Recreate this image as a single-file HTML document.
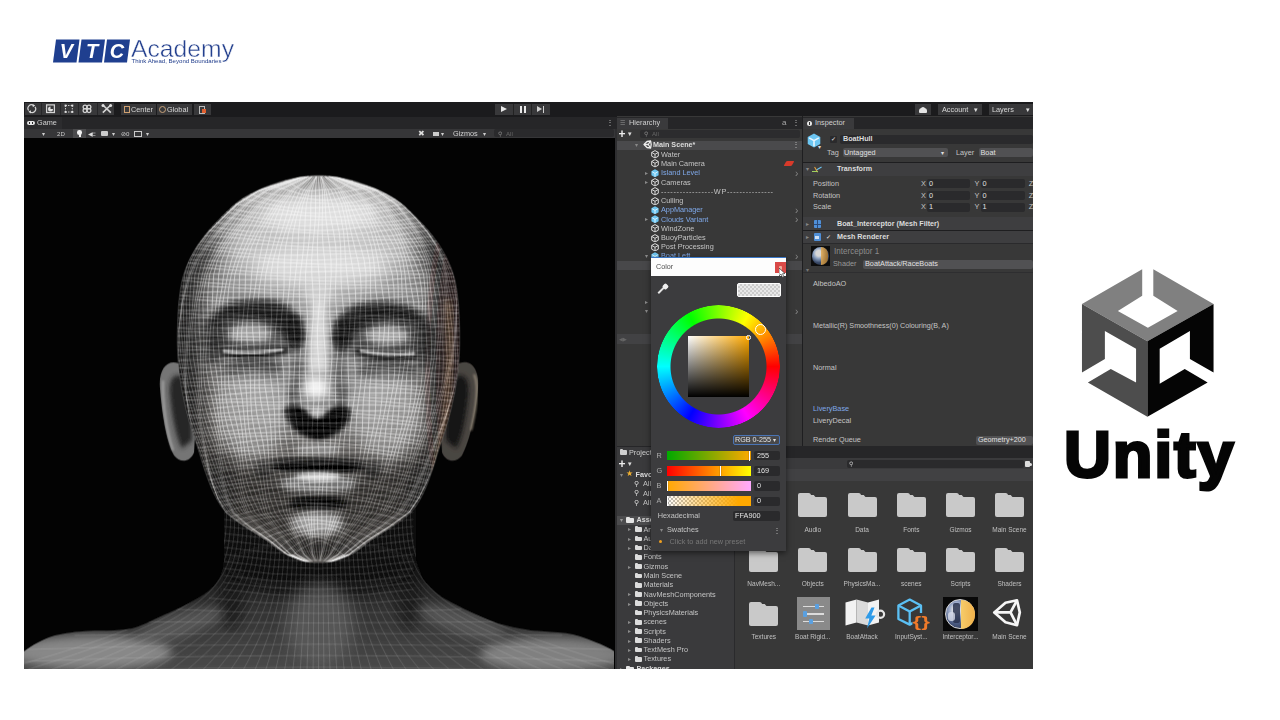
<!DOCTYPE html>
<html lang="en">
<head>
<meta charset="utf-8">
<title>VTC Academy - Unity</title>
<style>
html,body{margin:0;padding:0;background:#fff;}
body{width:1280px;height:720px;position:relative;overflow:hidden;font-family:"Liberation Sans",sans-serif;}
.abs{position:absolute;}
#edbg{position:absolute;left:24px;top:102px;width:1009px;height:567px;background:#383838;}
#ed{position:absolute;left:24px;top:102px;width:1009px;height:567px;overflow:hidden;font-size:8px;color:#c8c8c8;line-height:9px;filter:blur(0.42px);}
#ed div{position:absolute;white-space:nowrap;}
.t{color:#c4c4c4;}
.b{font-weight:bold;color:#dcdcdc;}
.blue{color:#7fa8e8;}
.fld{background:#2a2a2a;border-radius:1.5px;}
.dd{background:#515151;border-radius:1.5px;}
.btn{background:#3d3d3d;border-radius:1px;}
.lbl{font-size:6.5px;color:#c0c0c0;text-align:center;width:48px;}
</style>
</head>
<body>

<!-- VTC Academy logo -->
<div class="abs" id="vtc" style="left:0;top:0;width:260px;height:80px;filter:blur(0.3px);">
<svg width="260" height="80" viewBox="0 0 260 80">
  <g fill="#1f3f8f">
    <polygon points="56,39.5 79.5,39.5 76.5,62.5 53,62.5"/>
    <polygon points="81.5,39.5 105,39.5 102,62.5 78.5,62.5"/>
    <polygon points="107,39.5 130,39.5 127,62.5 104,62.5"/>
  </g>
  <g font-family="Liberation Sans, sans-serif" font-weight="bold" font-style="italic" font-size="20" fill="#fff" text-anchor="middle">
    <text x="66.3" y="58.2">V</text>
    <text x="92" y="58.2">T</text>
    <text x="117" y="58.2">C</text>
  </g>
  <text x="131" y="57" font-family="Liberation Sans, sans-serif" font-size="24" fill="#24408e" stroke="#fff" stroke-width="0.45" textLength="103" lengthAdjust="spacingAndGlyphs">Academy</text>
  <text x="131.5" y="62.6" font-family="Liberation Sans, sans-serif" font-size="4.6" fill="#24408e" textLength="90" lengthAdjust="spacingAndGlyphs">Think Ahead, Beyond Boundaries</text>
</svg>
</div>

<!-- Unity logo -->
<div class="abs" id="unity" style="left:1060px;top:255px;width:180px;height:170px;">
<svg width="180" height="170" viewBox="0 0 762 719.67">
  <polygon fill="#808080" points="93,207 348,60 348,172 245,237 372,308 498,237 395,172 395,60 650,207 370,365"/>
  <polygon fill="#4d4d4d" points="93,207 370,365 370,685 118,540 215,483 322,540 322,397 190,322 190,440 93,497"/>
  <polygon fill="#050505" points="650,207 370,365 370,685 625,540 528,483 422,545 422,397 550,322 550,440 650,497"/>
</svg>
</div>
<div class="abs" id="unitytxt" style="left:1064px;top:415px;width:190px;height:80px;font-weight:bold;font-size:65px;line-height:80px;color:#050505;-webkit-text-stroke:3px #050505;letter-spacing:1.8px;">Unity</div>

<!-- Unity editor screenshot -->
<div id="edbg"></div>
<div id="ed">
<svg width="0" height="0" style="position:absolute"><defs><symbol id="cube" viewBox="0 0 8 8.6"><path d="M4,0.6 L7.3,2.4 V6.2 L4,8 L0.7,6.2 V2.4 Z M0.7,2.4 L4,4.3 L7.3,2.4 M4,4.3 V8" fill="none" stroke="#dcdcdc" stroke-width="1" stroke-linejoin="round"/></symbol><symbol id="cubeb" viewBox="0 0 8 8.6"><path d="M4,0.3 L7.6,2.3 V6.3 L4,8.3 L0.4,6.3 V2.3 Z" fill="#6cc6f2"/><path d="M1.2,2.8 L4,4.4 L6.8,2.8 M4,4.4 V7.6" fill="none" stroke="#e8f6ff" stroke-width="0.9"/></symbol></defs></svg>
<div style="left:0.0px;top:0.0px;width:1009.0px;height:15.0px;background:#1b1b1d;"></div>
<div style="left:0.7px;top:1.3px;width:89.5px;height:11.3px;background:#38383a;"></div>
<div style="left:17.2px;top:1.3px;width:0.8px;height:11.3px;background:#262628;"></div>
<div style="left:35.7px;top:1.3px;width:0.8px;height:11.3px;background:#262628;"></div>
<div style="left:54.0px;top:1.3px;width:0.8px;height:11.3px;background:#262628;"></div>
<div style="left:72.5px;top:1.3px;width:0.8px;height:11.3px;background:#262628;"></div>
<div style="left:0.0px;top:1.0px;width:92px;height:12px;"><svg width="92" height="12" viewBox="24 103 92 12"><g fill="none" stroke="#d4d4d4" stroke-width="1.25"><path d="M28.6,110.5 A3.6,3.6 0 0 1 33.5,105.4 M35,106.9 A3.6,3.6 0 0 1 30.1,112"/><rect x="46.6" y="104.9" width="7.8" height="7.6"/><path d="M65.5,105.5 V112 M72.3,105.5 V112 M65.5,105.5 H72.3 M65.5,112 H72.3" stroke-dasharray="1.3 1.3" stroke-width="1"/><circle cx="85" cy="107" r="1.9"/><circle cx="89" cy="107" r="1.9"/><circle cx="85" cy="110.6" r="1.9"/><circle cx="89" cy="110.6" r="1.9"/><path d="M102.8,105 L110.8,112.6 M110.8,105 L102.8,112.6" stroke-width="1.6"/></g><g fill="#e0e0e0"><path d="M32.6,104 L35.2,105.6 L32.8,107.2Z M31,113.4 L28.4,111.8 L30.8,110.2Z"/><path d="M50.5,106.5 A2.5,2.5 0 1 0 53,109 L50.5,109Z"/><rect x="64.6" y="104.6" width="1.9" height="1.9"/><rect x="71.4" y="104.6" width="1.9" height="1.9"/><rect x="64.6" y="111" width="1.9" height="1.9"/><rect x="71.4" y="111" width="1.9" height="1.9"/><circle cx="103" cy="105.4" r="1.5"/><circle cx="110.6" cy="105.4" r="1.5"/></g></svg></div>
<div style="left:97.3px;top:2.0px;width:35.0px;height:11.0px;background:#38383a;"></div>
<div style="left:133.0px;top:2.0px;width:35.0px;height:11.0px;background:#38383a;"></div>
<div style="left:99.5px;top:4.0px;width:6.0px;height:7.0px;border:1px solid #d0a070;box-sizing:border-box;"></div>
<div class="t" style="left:107.0px;top:2.8px;height:10px;line-height:10px;font-size:7.3px;color:#d8d8d8;">Center</div>
<div style="left:134.5px;top:4.0px;width:7.0px;height:7.0px;border-radius:50%;border:1.5px solid #c9a27a;box-sizing:border-box;"></div>
<div class="t" style="left:143.0px;top:2.8px;height:10px;line-height:10px;font-size:7.3px;color:#d8d8d8;">Global</div>
<div style="left:170.4px;top:2.0px;width:16.6px;height:11.0px;background:#38383a;"></div>
<div style="left:175.0px;top:3.5px;width:6.0px;height:8.0px;border:1px solid #bbb;box-sizing:border-box;"></div>
<div style="left:178.0px;top:6.5px;width:4.0px;height:4.0px;background:#e06030;"></div>
<div style="left:471.3px;top:2.0px;width:54.3px;height:11.0px;background:#38383a;"></div>
<div style="left:489.2px;top:2.0px;width:0.8px;height:11.0px;background:#222;"></div>
<div style="left:507.4px;top:2.0px;width:0.8px;height:11.0px;background:#222;"></div>
<div style="left:477.0px;top:4.0px;width:0;height:0;border-left:6px solid #e8e8e8;border-top:3.5px solid transparent;border-bottom:3.5px solid transparent;"></div>
<div style="left:495.5px;top:4.0px;width:2.0px;height:7.0px;background:#e8e8e8;"></div>
<div style="left:499.5px;top:4.0px;width:2.0px;height:7.0px;background:#e8e8e8;"></div>
<div style="left:513.0px;top:4.0px;width:0;height:0;border-left:5px solid #d0d0d0;border-top:3.5px solid transparent;border-bottom:3.5px solid transparent;"></div>
<div style="left:518.5px;top:4.0px;width:1.5px;height:7.0px;background:#d0d0d0;"></div>
<div style="left:890.5px;top:2.0px;width:16.5px;height:11.0px;background:#38383a;"></div>
<div style="left:894.5px;top:6.0px;width:8.5px;height:4.5px;background:#e4e4e4;border-radius:3px 3px 1px 1px;"></div>
<div style="left:896.5px;top:4.5px;width:4.5px;height:4.0px;background:#e4e4e4;border-radius:50%;"></div>
<div style="left:913.5px;top:2.0px;width:44.5px;height:11.0px;background:#38383a;"></div>
<div class="t" style="left:918.0px;top:2.8px;height:10px;line-height:10px;font-size:7.3px;color:#d8d8d8;">Account</div>
<div class="t" style="left:950.0px;top:3.0px;height:10px;line-height:10px;font-size:7px;color:#e0e0e0;">&#9662;</div>
<div style="left:964.7px;top:2.0px;width:44.3px;height:11.0px;background:#38383a;"></div>
<div class="t" style="left:968.0px;top:2.8px;height:10px;line-height:10px;font-size:7.3px;color:#d8d8d8;">Layers</div>
<div class="t" style="left:1002.0px;top:3.0px;height:10px;line-height:10px;font-size:7px;color:#e0e0e0;">&#9662;</div>
<div style="left:0.0px;top:15.0px;width:1009.0px;height:11.5px;background:#262628;"></div>
<div style="left:0.0px;top:15.0px;width:38.0px;height:11.5px;background:#2c2c2e;"></div>
<div style="left:3.0px;top:19.2px;width:7.6px;height:4.0px;background:#e6e6e6;border-radius:2px;"></div>
<div style="left:5.0px;top:20.4px;width:1.2px;height:1.6px;background:#2a2a2c;"></div>
<div style="left:7.8px;top:20.4px;width:1.2px;height:1.6px;background:#2a2a2c;"></div>
<div class="t" style="left:13.0px;top:16.3px;height:10px;line-height:10px;font-size:7.3px;color:#d0d0d0;">Game</div>
<div class="t" style="left:581.5px;top:16.0px;height:10px;line-height:10px;font-size:8px;color:#bbb;">&#8942;</div>
<div style="left:0.0px;top:26.5px;width:591.4px;height:9.5px;background:#363638;"></div>
<div class="t" style="left:18.0px;top:26.7px;height:10px;line-height:10px;font-size:6px;color:#cfcfcf;">&#9662;</div>
<div class="t" style="left:33.0px;top:26.7px;height:10px;line-height:10px;font-size:6.1px;color:#c8c8c8;">2D</div>
<div style="left:49.0px;top:26.5px;width:13.0px;height:9.5px;background:#4a4a4c;"></div>
<div style="left:53.3px;top:28.2px;width:4.6px;height:4.6px;background:#f0f0f0;border-radius:50%;"></div>
<div style="left:54.6px;top:32.2px;width:2.0px;height:2.5px;background:#f0f0f0;"></div>
<div class="t" style="left:64.0px;top:26.7px;height:10px;line-height:10px;font-size:6px;color:#ddd;letter-spacing:-2px;">&#9664;&#8834;</div>
<div style="left:77.0px;top:29.3px;width:7.0px;height:4.5px;background:#ccc;border-radius:1px;"></div>
<div class="t" style="left:88.0px;top:26.7px;height:10px;line-height:10px;font-size:6px;color:#cfcfcf;">&#9662;</div>
<div class="t" style="left:97.0px;top:26.7px;height:10px;line-height:10px;font-size:6.1px;color:#ccc;">&#8856;0</div>
<div style="left:110.0px;top:28.8px;width:8.0px;height:6.0px;border:1px solid #ccc;box-sizing:border-box;"></div>
<div class="t" style="left:122.0px;top:26.7px;height:10px;line-height:10px;font-size:6px;color:#cfcfcf;">&#9662;</div>
<div class="t" style="left:394.0px;top:26.7px;height:10px;line-height:10px;font-size:8px;color:#ddd;">&#10006;</div>
<div style="left:409.0px;top:29.6px;width:6.0px;height:4.5px;background:#ccc;"></div>
<div class="t" style="left:417.0px;top:26.7px;height:10px;line-height:10px;font-size:6px;color:#cfcfcf;">&#9662;</div>
<div class="t" style="left:429.0px;top:27.0px;height:10px;line-height:10px;font-size:7.3px;color:#d0d0d0;">Gizmos</div>
<div class="t" style="left:459.0px;top:26.7px;height:10px;line-height:10px;font-size:6px;color:#cfcfcf;">&#9662;</div>
<div style="left:470.0px;top:27.3px;width:120.0px;height:8.0px;background:#2a2a2c;border-radius:2px;"></div>
<div class="t" style="left:474.0px;top:26.7px;height:10px;line-height:10px;font-size:6px;color:#888;">&#9906;</div>
<div class="t" style="left:482.0px;top:26.9px;height:10px;line-height:10px;font-size:6.1px;color:#666;">All</div>
<div style="left:0;top:35.6px;width:591px;height:531.4px;background:#020202;overflow:hidden;">
<svg width="590" height="531.4" viewBox="24 137.6 590 531.4">
<defs>
  <filter id="b05" x="-5%" y="-5%" width="110%" height="110%"><feGaussianBlur stdDeviation="0.5"/></filter>
  <filter id="b1" x="-20%" y="-20%" width="140%" height="140%"><feGaussianBlur stdDeviation="1.2"/></filter>
  <filter id="b2" x="-30%" y="-30%" width="160%" height="160%"><feGaussianBlur stdDeviation="2.2"/></filter>
  <filter id="b3" x="-30%" y="-30%" width="160%" height="160%"><feGaussianBlur stdDeviation="3.2"/></filter>
  <filter id="b5" x="-40%" y="-40%" width="180%" height="180%"><feGaussianBlur stdDeviation="5"/></filter>
  <filter id="b8" x="-50%" y="-50%" width="200%" height="200%"><feGaussianBlur stdDeviation="8"/></filter>
  <filter id="b12" x="-60%" y="-60%" width="220%" height="220%"><feGaussianBlur stdDeviation="12"/></filter>
  <radialGradient id="hg" cx="318" cy="310" r="185" gradientUnits="userSpaceOnUse">
    <stop offset="0" stop-color="#9a9a9a"/><stop offset=".5" stop-color="#858585"/><stop offset=".78" stop-color="#5a5856"/><stop offset="1" stop-color="#2c2a28"/>
  </radialGradient>
  <linearGradient id="ng" x1="0" y1="530" x2="0" y2="669" gradientUnits="userSpaceOnUse">
    <stop offset="0" stop-color="#0c0c0c"/><stop offset=".3" stop-color="#1e1e1e"/><stop offset=".6" stop-color="#343434"/><stop offset="1" stop-color="#4a4a4a"/>
  </linearGradient>
  <path id="headp" d="M327.2,175.4 L329.7,175.6 L332.2,175.9 L334.7,176.2 L337.1,176.6 L339.5,177.0 L341.8,177.5 L344.1,177.9 L346.4,178.5 L348.7,179.0 L351.0,179.6 L353.4,180.3 L355.8,181.0 L358.3,181.8 L360.9,182.7 L363.5,183.6 L366.2,184.5 L368.9,185.5 L371.6,186.5 L374.3,187.6 L377.0,188.8 L379.6,190.0 L382.2,191.2 L384.7,192.5 L387.2,193.8 L389.8,195.2 L392.2,196.6 L394.5,198.1 L396.8,199.6 L399.0,201.2 L401.1,202.8 L403.1,204.4 L405.1,206.1 L406.9,207.9 L408.8,209.7 L410.8,211.6 L412.8,213.5 L414.8,215.5 L416.8,217.6 L418.9,219.7 L421.0,221.9 L423.1,224.1 L425.2,226.4 L427.3,228.7 L429.3,231.1 L431.2,233.4 L433.1,235.8 L434.9,238.3 L436.7,240.8 L438.5,243.2 L440.2,245.8 L441.8,248.4 L443.3,251.0 L444.8,253.7 L446.3,256.5 L447.6,259.2 L448.9,262.1 L450.2,264.9 L451.3,267.8 L452.4,270.8 L453.3,273.8 L454.2,276.8 L455.0,279.8 L455.7,282.8 L456.2,285.9 L456.8,289.1 L457.2,292.3 L457.6,295.5 L458.0,298.9 L458.4,302.3 L458.7,305.9 L458.9,309.5 L459.2,313.1 L459.3,316.9 L459.5,320.6 L459.6,324.4 L459.7,328.1 L459.8,331.9 L459.8,335.6 L459.8,339.4 L459.8,343.1 L459.7,346.9 L459.6,350.6 L459.4,354.4 L459.2,358.1 L458.9,361.9 L458.6,365.6 L458.2,369.4 L457.8,373.1 L457.2,376.9 L456.7,380.6 L456.1,384.4 L455.5,388.1 L454.8,391.9 L454.0,395.6 L453.3,399.4 L452.4,403.1 L451.6,406.9 L450.7,410.6 L449.7,414.2 L448.8,417.8 L447.8,421.4 L446.7,424.9 L445.7,428.4 L444.6,431.8 L443.4,435.2 L442.3,438.5 L441.3,441.8 L440.2,444.9 L439.2,448.1 L438.3,451.1 L437.3,454.1 L436.4,457.1 L435.6,459.9 L434.7,462.8 L433.7,465.7 L432.8,468.7 L431.8,471.6 L430.7,474.5 L429.7,477.5 L428.6,480.5 L427.4,483.5 L426.3,486.4 L425.0,489.3 L423.8,492.0 L422.5,494.7 L421.1,497.3 L419.7,499.9 L418.2,502.3 L416.8,504.7 L415.2,507.0 L413.5,509.1 L411.8,511.2 L410.0,513.1 L408.1,514.9 L406.1,516.6 L404.1,518.2 L401.9,519.8 L399.9,521.2 L397.9,522.6 L395.9,523.9 L394.1,525.1 L392.2,526.3 L390.5,527.4 L388.8,528.5 L387.2,529.5 L385.6,530.5 L384.0,531.5 L382.5,532.4 L381.0,533.3 L379.5,534.3 L378.1,535.2 L376.7,536.1 L375.3,536.9 L374.0,537.8 L372.6,538.7 L371.3,539.7 L370.0,540.6 L368.7,541.5 L367.4,542.5 L366.1,543.5 L364.9,544.5 L363.6,545.5 L362.4,546.4 L361.2,547.3 L360.0,548.2 L358.9,549.0 L357.7,549.8 L356.6,550.6 L355.4,551.4 L354.3,552.1 L353.2,552.8 L352.0,553.5 L350.9,554.1 L349.7,554.8 L348.5,555.4 L347.3,556.0 L346.2,556.5 L345.0,557.1 L343.8,557.6 L342.5,558.1 L341.3,558.5 L340.1,559.0 L338.8,559.4 L337.6,559.8 L336.3,560.2 L335.0,560.5 L333.6,560.9 L332.2,561.2 L330.7,561.5 L329.2,561.7 L327.6,561.9 L326.0,562.2 L324.3,562.3 L322.7,562.5 L321.0,562.6 L319.3,562.6 L317.7,562.6 L316.0,562.6 L314.3,562.5 L312.7,562.3 L311.0,562.2 L309.4,561.9 L307.8,561.7 L306.3,561.5 L304.8,561.2 L303.4,560.9 L302.0,560.5 L300.7,560.2 L299.4,559.8 L298.2,559.4 L296.9,559.0 L295.7,558.5 L294.5,558.1 L293.2,557.6 L292.0,557.1 L290.8,556.5 L289.7,556.0 L288.5,555.4 L287.3,554.8 L286.1,554.1 L285.0,553.5 L283.8,552.8 L282.7,552.1 L281.6,551.4 L280.4,550.6 L279.3,549.8 L278.1,549.0 L277.0,548.2 L275.8,547.3 L274.6,546.4 L273.4,545.5 L272.1,544.5 L270.9,543.5 L269.6,542.5 L268.3,541.5 L267.0,540.6 L265.7,539.7 L264.4,538.7 L263.0,537.8 L261.7,536.9 L260.3,536.1 L258.9,535.2 L257.5,534.3 L256.0,533.3 L254.5,532.4 L253.0,531.5 L251.4,530.5 L249.8,529.5 L248.2,528.5 L246.5,527.4 L244.8,526.3 L242.9,525.1 L241.1,523.9 L239.1,522.6 L237.1,521.2 L235.1,519.8 L232.9,518.2 L230.9,516.6 L228.9,514.9 L227.0,513.1 L225.2,511.2 L223.5,509.1 L221.8,507.0 L220.2,504.7 L218.8,502.3 L217.3,499.9 L215.9,497.3 L214.5,494.7 L213.2,492.0 L212.0,489.3 L210.7,486.4 L209.6,483.5 L208.4,480.5 L207.3,477.5 L206.3,474.5 L205.2,471.6 L204.2,468.7 L203.3,465.7 L202.3,462.8 L201.4,459.9 L200.6,457.1 L199.7,454.1 L198.7,451.1 L197.8,448.1 L196.8,444.9 L195.7,441.8 L194.7,438.5 L193.6,435.2 L192.4,431.8 L191.3,428.4 L190.3,424.9 L189.2,421.4 L188.2,417.8 L187.3,414.2 L186.3,410.6 L185.4,406.9 L184.6,403.1 L183.7,399.4 L183.0,395.6 L182.2,391.9 L181.5,388.1 L180.9,384.4 L180.3,380.6 L179.8,376.9 L179.2,373.1 L178.8,369.4 L178.4,365.6 L178.1,361.9 L177.8,358.1 L177.6,354.4 L177.4,350.6 L177.3,346.9 L177.2,343.1 L177.2,339.4 L177.2,335.6 L177.2,331.9 L177.3,328.1 L177.4,324.4 L177.5,320.6 L177.7,316.9 L177.8,313.1 L178.1,309.5 L178.3,305.9 L178.6,302.3 L179.0,298.9 L179.4,295.5 L179.8,292.3 L180.2,289.1 L180.8,285.9 L181.3,282.8 L182.0,279.8 L182.8,276.8 L183.7,273.8 L184.6,270.8 L185.7,267.8 L186.8,264.9 L188.1,262.1 L189.4,259.2 L190.7,256.5 L192.2,253.7 L193.7,251.0 L195.2,248.4 L196.8,245.8 L198.5,243.2 L200.3,240.8 L202.1,238.3 L203.9,235.8 L205.8,233.4 L207.7,231.1 L209.7,228.7 L211.8,226.4 L213.9,224.1 L216.0,221.9 L218.1,219.7 L220.2,217.6 L222.2,215.5 L224.2,213.5 L226.2,211.6 L228.2,209.7 L230.1,207.9 L231.9,206.1 L233.9,204.4 L235.9,202.8 L238.0,201.2 L240.2,199.6 L242.5,198.1 L244.8,196.6 L247.2,195.2 L249.8,193.8 L252.3,192.5 L254.8,191.2 L257.4,190.0 L260.0,188.8 L262.7,187.6 L265.4,186.5 L268.1,185.5 L270.8,184.5 L273.5,183.6 L276.1,182.7 L278.7,181.8 L281.2,181.0 L283.6,180.3 L286.0,179.6 L288.3,179.0 L290.6,178.5 L292.9,177.9 L295.2,177.5 L297.5,177.0 L299.9,176.6 L302.3,176.2 L304.8,175.9 L307.3,175.6 L309.8,175.4 L312.2,175.2 L314.8,175.1 L317.2,175.0 L319.8,175.0 L322.2,175.1 L324.8,175.2Z"/>
  <path id="neckp" d="M224,505 L224,560 C223,575 216,588 198,597.5 C185,605 175,610 165,614 C150,621 140,626 132,628 C115,631 100,630 90,630.5 C75,631 65,633 55,635 C42,639 32,645 24,651 L24,669 L616,669 L616,652 C608,647 602,644 596,642 C585,637 575,634 566,632.7 C555,631.5 542,631 531,630 C520,628 508,626 498,623 C485,618 475,614 465,609 C452,602 443,598 437,593 C428,585 423,580 421,574 L416,560 L416,505 Z"/>
  <path id="msh" d="M301.6,176.0 257.6,190.0 236.1,204.0 222.0,218.0 208.1,232.0 197.0,246.0 188.9,260.0 184.6,274.0 183.3,288.0 181.7,302.0 180.4,316.0 178.5,330.0 178.2,344.0 178.9,358.0 181.6,372.0 184.2,386.0 186.8,400.0 189.0,414.0 192.0,428.0 196.7,442.0 201.9,456.0 207.2,470.0 212.5,484.0 217.9,498.0 225.5,512.0 244.1,526.0 266.7,540.0 286.6,554.0 305.4,561.5 M302.8,176.0 259.1,190.0 236.7,204.0 221.9,218.0 208.1,232.0 197.9,246.0 190.9,260.0 186.9,274.0 184.9,288.0 182.2,302.0 180.4,316.0 179.2,330.0 179.9,344.0 181.2,358.0 183.6,372.0 185.1,386.0 186.9,400.0 189.1,414.0 193.2,428.0 198.7,442.0 204.0,456.0 208.3,470.0 212.6,484.0 217.7,498.0 225.9,512.0 245.4,526.0 268.3,540.0 287.5,554.0 305.5,561.5 M303.9,176.0 259.6,190.0 236.6,204.0 221.9,218.0 209.1,232.0 200.0,246.0 193.4,260.0 188.6,274.0 185.6,288.0 182.5,302.0 181.3,316.0 181.1,330.0 182.5,344.0 183.4,358.0 184.7,372.0 185.5,386.0 187.3,400.0 190.6,414.0 195.5,428.0 201.0,442.0 205.4,456.0 208.7,470.0 212.6,484.0 218.3,498.0 227.5,512.0 247.3,526.0 269.5,540.0 287.3,554.0 305.6,561.5 M303.9,176.0 259.4,190.0 236.6,204.0 223.0,218.0 211.3,232.0 202.6,246.0 195.3,260.0 189.6,274.0 186.1,288.0 183.7,302.0 183.5,316.0 184.0,330.0 184.9,344.0 184.9,358.0 185.3,372.0 186.2,386.0 189.1,400.0 193.2,414.0 198.0,428.0 202.6,442.0 206.0,456.0 209.0,470.0 213.6,484.0 220.3,498.0 229.8,512.0 248.8,526.0 269.6,540.0 286.6,554.0 305.8,561.5 M303.1,176.0 259.2,190.0 237.7,204.0 225.3,218.0 214.0,232.0 204.7,246.0 196.4,260.0 190.3,274.0 187.5,288.0 186.2,302.0 186.7,316.0 186.7,330.0 186.6,344.0 185.7,358.0 186.4,372.0 188.3,386.0 192.0,400.0 196.0,414.0 200.0,428.0 203.5,442.0 206.5,456.0 210.2,470.0 215.8,484.0 222.9,498.0 231.7,512.0 249.3,526.0 269.2,540.0 286.3,554.0 306.0,561.5 M302.4,176.0 260.1,190.0 240.0,204.0 227.9,218.0 216.1,232.0 205.8,246.0 197.3,260.0 192.0,274.0 190.3,288.0 189.6,302.0 189.6,316.0 188.6,330.0 187.7,344.0 187.1,358.0 188.7,372.0 191.5,386.0 195.1,400.0 198.2,414.0 201.1,428.0 204.3,442.0 208.1,456.0 212.7,470.0 218.7,484.0 225.0,498.0 232.7,512.0 249.3,526.0 269.3,540.0 287.2,554.0 306.2,561.5 M302.7,176.0 262.1,190.0 242.5,204.0 229.9,218.0 217.3,232.0 206.9,246.0 199.1,260.0 194.9,274.0 193.9,288.0 192.7,302.0 191.7,316.0 190.0,330.0 189.3,344.0 189.7,358.0 192.2,372.0 194.9,386.0 197.5,400.0 199.6,414.0 202.2,428.0 206.2,442.0 210.9,456.0 215.9,470.0 221.1,484.0 226.3,498.0 233.2,512.0 249.9,526.0 270.5,540.0 288.8,554.0 306.4,561.5 M303.9,176.0 264.4,190.0 244.4,204.0 231.1,218.0 218.3,232.0 208.7,246.0 202.2,260.0 198.7,274.0 197.2,288.0 195.0,302.0 193.3,316.0 191.9,330.0 192.2,344.0 193.5,358.0 195.9,372.0 197.6,386.0 199.2,400.0 201.1,414.0 204.4,428.0 209.3,442.0 214.3,456.0 218.6,470.0 222.7,484.0 227.1,498.0 234.3,512.0 251.7,526.0 272.7,540.0 290.4,554.0 306.7,561.5 M305.3,176.0 266.0,190.0 245.4,204.0 232.0,218.0 220.2,232.0 211.9,246.0 206.1,260.0 202.2,274.0 199.7,288.0 196.8,302.0 195.4,316.0 195.0,330.0 196.3,344.0 197.4,358.0 198.8,372.0 199.5,386.0 201.0,400.0 203.5,414.0 207.8,428.0 213.0,442.0 217.3,456.0 220.4,470.0 223.8,484.0 228.6,498.0 236.6,512.0 254.4,526.0 274.6,540.0 290.9,554.0 307.0,561.5 M305.9,176.0 266.5,190.0 246.2,204.0 233.8,218.0 223.4,232.0 215.9,246.0 209.7,260.0 204.8,274.0 201.7,288.0 199.2,302.0 198.8,316.0 199.3,330.0 200.4,344.0 200.6,358.0 201.1,372.0 201.6,386.0 203.8,400.0 207.3,414.0 211.9,428.0 216.2,442.0 219.3,456.0 221.8,470.0 225.6,484.0 231.3,498.0 239.9,512.0 256.9,526.0 275.6,540.0 290.6,554.0 307.3,561.5 M305.5,176.0 266.9,190.0 247.8,204.0 236.9,218.0 227.3,232.0 219.4,246.0 212.4,260.0 207.0,274.0 204.2,288.0 202.8,302.0 203.3,316.0 203.7,330.0 203.8,344.0 203.1,358.0 203.4,372.0 204.7,386.0 207.9,400.0 211.6,414.0 215.4,428.0 218.6,442.0 221.1,456.0 223.9,470.0 228.7,484.0 234.9,498.0 242.9,512.0 258.5,526.0 275.8,540.0 290.4,554.0 307.6,561.5 M304.8,176.0 268.1,190.0 250.7,204.0 240.6,218.0 230.7,232.0 222.1,246.0 214.6,260.0 209.7,274.0 208.1,288.0 207.5,302.0 207.9,316.0 207.3,330.0 206.5,344.0 205.7,358.0 206.8,372.0 209.1,386.0 212.5,400.0 215.4,414.0 218.0,428.0 220.6,442.0 223.5,456.0 227.3,470.0 232.6,484.0 238.4,498.0 245.1,512.0 259.4,526.0 276.2,540.0 291.3,554.0 307.9,561.5 M304.8,176.0 270.5,190.0 254.2,204.0 243.9,218.0 233.3,232.0 224.3,246.0 217.4,260.0 213.7,274.0 212.9,288.0 212.3,302.0 211.7,316.0 210.2,330.0 209.3,344.0 209.3,358.0 211.4,372.0 213.9,386.0 216.5,400.0 218.4,414.0 220.3,428.0 223.3,442.0 227.2,456.0 231.6,470.0 236.4,484.0 240.9,498.0 246.6,512.0 260.4,526.0 277.6,540.0 293.1,554.0 308.3,561.5 M306.0,176.0 273.4,190.0 257.2,204.0 246.2,218.0 235.4,232.0 227.1,246.0 221.5,260.0 218.7,274.0 217.8,288.0 216.2,302.0 214.7,316.0 213.2,330.0 213.2,344.0 214.3,358.0 216.5,372.0 218.3,386.0 219.7,400.0 221.0,414.0 223.4,428.0 227.4,442.0 231.7,456.0 235.6,470.0 239.2,484.0 242.8,498.0 248.4,512.0 262.6,526.0 280.1,540.0 295.1,554.0 308.7,561.5 M307.7,176.0 275.9,190.0 259.2,204.0 248.0,218.0 238.0,232.0 231.1,246.0 226.5,260.0 223.7,274.0 221.9,288.0 219.4,302.0 217.9,316.0 217.3,330.0 218.4,344.0 219.6,358.0 221.1,372.0 221.7,386.0 222.6,400.0 224.4,414.0 227.8,428.0 232.2,442.0 236.0,456.0 238.8,470.0 241.4,484.0 244.9,498.0 251.3,512.0 265.9,526.0 282.7,540.0 296.3,554.0 309.1,561.5 M308.7,176.0 277.2,190.0 260.7,204.0 250.4,218.0 241.9,232.0 236.1,246.0 231.5,260.0 227.8,274.0 225.2,288.0 222.8,302.0 222.3,316.0 222.7,330.0 223.9,344.0 224.4,358.0 224.8,372.0 224.9,386.0 226.3,400.0 229.1,414.0 232.9,428.0 236.8,442.0 239.5,456.0 241.3,470.0 243.9,484.0 248.3,498.0 255.2,512.0 269.2,526.0 284.5,540.0 296.5,554.0 309.5,561.5 M308.6,176.0 278.1,190.0 262.8,204.0 254.1,218.0 246.7,232.0 241.0,246.0 235.6,260.0 231.3,274.0 228.7,288.0 227.4,302.0 227.8,316.0 228.4,330.0 228.9,344.0 228.3,358.0 228.2,372.0 228.9,386.0 231.3,400.0 234.5,414.0 237.8,428.0 240.5,442.0 242.2,456.0 244.1,470.0 247.6,484.0 252.6,498.0 259.3,512.0 271.8,526.0 285.3,540.0 296.4,554.0 309.9,561.5 M308.0,176.0 279.6,190.0 266.1,204.0 258.5,218.0 251.4,232.0 245.0,246.0 239.0,260.0 234.9,274.0 233.4,288.0 233.0,302.0 233.7,316.0 233.5,330.0 232.9,344.0 231.9,358.0 232.4,372.0 234.2,386.0 237.0,400.0 239.7,414.0 241.8,428.0 243.5,442.0 245.4,456.0 248.1,470.0 252.3,484.0 257.1,498.0 262.6,512.0 273.4,526.0 286.0,540.0 297.2,554.0 310.4,561.5 M308.0,176.0 282.2,190.0 270.2,204.0 262.9,218.0 255.1,232.0 248.2,246.0 242.7,260.0 239.6,274.0 239.2,288.0 239.0,302.0 238.9,316.0 237.7,330.0 236.7,344.0 236.4,358.0 237.9,372.0 240.1,386.0 242.4,400.0 243.9,414.0 245.2,428.0 247.0,442.0 249.7,456.0 253.2,470.0 257.2,484.0 260.8,498.0 265.0,512.0 275.0,526.0 287.5,540.0 299.2,554.0 310.9,561.5 M309.0,176.0 285.5,190.0 274.1,204.0 266.2,218.0 258.1,232.0 251.7,246.0 247.4,260.0 245.5,274.0 245.2,288.0 244.4,302.0 243.2,316.0 241.7,330.0 241.4,344.0 242.1,358.0 244.1,372.0 245.8,386.0 246.9,400.0 247.6,414.0 248.9,428.0 251.6,442.0 255.0,456.0 258.3,470.0 261.1,484.0 263.6,498.0 267.3,512.0 277.4,526.0 290.2,540.0 301.5,554.0 311.3,561.5 M310.7,176.0 288.7,190.0 277.0,204.0 268.9,218.0 261.4,232.0 256.3,246.0 253.2,260.0 251.6,274.0 250.6,288.0 248.8,302.0 247.3,316.0 246.6,330.0 247.3,344.0 248.6,358.0 250.0,372.0 250.5,386.0 250.8,400.0 251.7,414.0 253.9,428.0 257.3,442.0 260.4,456.0 262.6,470.0 264.3,484.0 266.3,498.0 270.5,512.0 280.9,526.0 293.2,540.0 303.2,554.0 311.8,561.5 M312.1,176.0 290.8,190.0 279.2,204.0 271.7,218.0 265.7,232.0 261.9,246.0 259.2,260.0 257.0,274.0 255.1,288.0 253.0,302.0 252.3,316.0 252.6,330.0 253.9,344.0 254.6,358.0 254.9,372.0 254.6,386.0 255.2,400.0 256.9,414.0 259.8,428.0 262.9,442.0 264.9,456.0 266.0,470.0 267.4,484.0 270.0,498.0 274.9,512.0 284.9,526.0 295.7,540.0 303.8,554.0 312.3,561.5 M312.5,176.0 292.1,190.0 281.6,204.0 275.6,218.0 271.1,232.0 267.7,246.0 264.5,260.0 261.5,274.0 259.3,288.0 258.1,302.0 258.5,316.0 259.3,330.0 260.0,344.0 259.6,358.0 259.2,372.0 259.2,386.0 260.7,400.0 263.1,414.0 265.8,428.0 267.7,442.0 268.6,456.0 269.4,470.0 271.4,484.0 274.9,498.0 279.7,512.0 288.3,526.0 297.1,540.0 304.0,554.0 312.9,561.5 M312.0,176.0 293.7,190.0 285.0,204.0 280.6,218.0 276.6,232.0 272.8,246.0 268.9,260.0 265.8,274.0 264.5,288.0 264.4,302.0 265.2,316.0 265.5,330.0 265.1,344.0 264.1,358.0 264.0,372.0 265.0,386.0 267.1,400.0 269.3,414.0 270.8,428.0 271.6,442.0 272.3,456.0 273.7,470.0 276.6,484.0 280.1,498.0 283.9,512.0 290.6,526.0 298.0,540.0 304.7,554.0 313.4,561.5 M311.8,176.0 296.3,190.0 289.5,204.0 285.6,218.0 281.3,232.0 276.9,246.0 273.1,260.0 270.9,274.0 270.8,288.0 271.2,302.0 271.5,316.0 270.8,330.0 269.7,344.0 269.1,358.0 270.0,372.0 271.7,386.0 273.5,400.0 274.6,414.0 275.0,428.0 275.6,442.0 276.9,456.0 279.2,470.0 282.1,484.0 284.6,498.0 287.0,512.0 292.4,526.0 299.5,540.0 306.5,554.0 313.9,561.5 M312.6,176.0 299.9,190.0 294.0,204.0 289.8,218.0 285.0,232.0 280.8,246.0 278.1,260.0 277.3,274.0 277.6,288.0 277.6,302.0 276.8,316.0 275.5,330.0 274.8,344.0 275.2,358.0 276.8,372.0 278.2,386.0 279.0,400.0 279.0,414.0 279.2,428.0 280.5,442.0 282.7,456.0 285.1,470.0 287.0,484.0 288.2,498.0 289.7,512.0 294.9,526.0 302.2,540.0 309.0,554.0 314.5,561.5 M314.3,176.0 303.5,190.0 297.6,204.0 293.1,218.0 288.6,232.0 285.7,246.0 284.3,260.0 284.1,274.0 284.0,288.0 282.9,302.0 281.6,316.0 280.7,330.0 281.1,344.0 282.2,358.0 283.5,372.0 283.9,386.0 283.6,400.0 283.5,414.0 284.4,428.0 286.5,442.0 288.7,456.0 290.2,470.0 290.8,484.0 291.3,498.0 293.1,512.0 298.6,526.0 305.5,540.0 311.1,554.0 315.0,561.5 M316.0,176.0 306.2,190.0 300.3,204.0 296.2,218.0 293.1,232.0 291.6,246.0 291.0,260.0 290.3,274.0 289.2,288.0 287.7,302.0 286.8,316.0 287.1,330.0 288.2,344.0 289.1,358.0 289.3,372.0 288.7,386.0 288.3,400.0 289.0,414.0 290.7,428.0 292.8,442.0 294.1,456.0 294.3,470.0 294.3,484.0 295.1,498.0 297.6,512.0 302.9,526.0 308.4,540.0 312.2,554.0 315.6,561.5 M316.7,176.0 307.9,190.0 302.9,204.0 300.2,218.0 298.6,232.0 298.0,246.0 297.1,260.0 295.5,274.0 294.0,288.0 293.0,302.0 293.3,316.0 294.2,330.0 295.1,344.0 295.0,358.0 294.2,372.0 293.6,386.0 294.0,400.0 295.5,414.0 297.3,428.0 298.4,442.0 298.4,456.0 298.0,470.0 298.4,484.0 300.1,498.0 302.7,512.0 306.8,526.0 310.3,540.0 312.5,554.0 316.2,561.5 M316.5,176.0 309.5,190.0 306.3,204.0 305.2,218.0 304.6,232.0 303.7,246.0 302.1,260.0 300.2,274.0 299.3,288.0 299.4,302.0 300.4,316.0 301.2,330.0 301.0,344.0 300.0,358.0 299.3,372.0 299.5,386.0 300.8,400.0 302.2,414.0 303.0,428.0 302.9,442.0 302.3,456.0 302.4,470.0 303.7,484.0 305.6,498.0 307.5,512.0 309.6,526.0 311.4,540.0 313.1,554.0 316.8,561.5 M316.1,176.0 312.0,190.0 310.8,204.0 310.6,218.0 309.9,232.0 308.4,246.0 306.6,260.0 305.5,274.0 305.7,288.0 306.6,302.0 307.4,316.0 307.1,330.0 306.1,344.0 305.2,358.0 305.3,372.0 306.4,386.0 307.7,400.0 308.2,414.0 307.8,428.0 307.1,442.0 307.0,456.0 308.0,470.0 309.6,484.0 310.8,498.0 311.1,512.0 311.7,526.0 312.8,540.0 314.7,554.0 317.3,561.5 M316.7,176.0 315.5,190.0 315.6,204.0 315.4,218.0 314.2,232.0 312.6,246.0 311.6,260.0 311.8,274.0 312.8,288.0 313.5,302.0 313.3,316.0 312.2,330.0 311.3,344.0 311.3,358.0 312.3,372.0 313.4,386.0 313.8,400.0 313.1,414.0 312.2,428.0 312.0,442.0 312.8,456.0 314.1,470.0 314.9,484.0 314.8,498.0 314.1,512.0 314.1,526.0 315.3,540.0 317.2,554.0 317.9,561.5 M318.2,176.0 319.3,190.0 319.7,204.0 319.0,218.0 317.9,232.0 317.3,246.0 317.8,260.0 318.9,274.0 319.7,288.0 319.4,302.0 318.3,316.0 317.4,330.0 317.5,344.0 318.4,358.0 319.4,372.0 319.6,386.0 318.8,400.0 317.7,414.0 317.3,428.0 318.0,442.0 319.1,456.0 319.7,470.0 319.3,484.0 318.1,498.0 317.3,512.0 317.6,526.0 318.6,540.0 319.6,554.0 318.5,561.5 M320.0,176.0 322.4,190.0 322.7,204.0 322.2,218.0 322.2,232.0 323.1,246.0 324.6,260.0 325.6,274.0 325.4,288.0 324.4,302.0 323.6,316.0 323.6,330.0 324.6,344.0 325.6,358.0 325.7,372.0 324.8,386.0 323.6,400.0 323.0,414.0 323.5,428.0 324.5,442.0 324.9,456.0 324.2,470.0 322.9,484.0 321.8,498.0 321.7,512.0 321.9,526.0 321.8,540.0 321.0,554.0 319.1,561.5 M321.1,176.0 324.4,190.0 325.2,204.0 325.9,218.0 327.6,232.0 329.6,246.0 331.0,260.0 331.2,274.0 330.3,288.0 329.6,302.0 329.8,316.0 330.8,330.0 331.8,344.0 331.9,358.0 330.9,372.0 329.7,386.0 329.1,400.0 329.4,414.0 330.2,428.0 330.4,442.0 329.5,456.0 328.0,470.0 326.8,484.0 326.5,498.0 326.8,512.0 326.1,526.0 324.1,540.0 321.4,554.0 319.7,561.5 M321.1,176.0 325.9,190.0 328.4,204.0 330.8,218.0 333.6,232.0 335.7,246.0 336.4,260.0 336.0,274.0 335.4,288.0 335.8,302.0 336.9,316.0 338.0,330.0 338.1,344.0 337.2,358.0 335.9,372.0 335.3,386.0 335.6,400.0 336.3,414.0 336.3,428.0 335.2,442.0 333.5,456.0 332.2,470.0 331.8,484.0 332.1,498.0 331.8,512.0 329.2,526.0 325.3,540.0 321.8,554.0 320.2,561.5 M320.6,176.0 328.1,190.0 332.6,204.0 336.2,218.0 339.2,232.0 340.6,246.0 340.9,260.0 340.9,274.0 341.5,288.0 342.8,302.0 344.0,316.0 344.2,330.0 343.3,344.0 342.1,358.0 341.5,372.0 341.9,386.0 342.5,400.0 342.5,414.0 341.3,428.0 339.4,442.0 337.9,456.0 337.4,470.0 337.6,484.0 337.4,498.0 335.8,512.0 331.4,526.0 326.5,540.0 323.1,554.0 320.8,561.5 M320.8,176.0 331.3,190.0 337.4,204.0 341.1,218.0 343.6,232.0 344.7,246.0 345.6,260.0 346.9,274.0 348.4,288.0 349.8,302.0 350.1,316.0 349.3,330.0 348.2,344.0 347.9,358.0 348.2,372.0 348.9,386.0 348.8,400.0 347.6,414.0 345.6,428.0 343.9,442.0 343.3,456.0 343.4,470.0 343.1,484.0 341.7,498.0 338.8,512.0 333.6,526.0 328.6,540.0 325.4,554.0 321.4,561.5 M322.1,176.0 335.1,190.0 341.6,204.0 344.9,218.0 347.2,232.0 349.0,246.0 351.3,260.0 353.7,274.0 355.3,288.0 355.8,302.0 355.1,316.0 354.2,330.0 353.9,344.0 354.6,358.0 355.3,372.0 355.3,386.0 354.0,400.0 352.0,414.0 350.3,428.0 349.4,442.0 349.4,456.0 349.1,470.0 347.6,484.0 345.0,498.0 341.7,512.0 336.6,526.0 331.7,540.0 327.9,554.0 322.0,561.5 M323.9,176.0 338.3,190.0 344.8,204.0 348.0,218.0 351.1,232.0 354.4,246.0 357.8,260.0 360.3,274.0 361.1,288.0 360.8,302.0 359.9,316.0 359.9,330.0 360.6,344.0 361.6,358.0 361.6,372.0 360.5,386.0 358.5,400.0 356.8,414.0 356.0,428.0 355.7,442.0 355.2,456.0 353.8,470.0 351.2,484.0 348.3,498.0 345.6,512.0 340.7,526.0 335.0,540.0 329.6,554.0 322.5,561.5 M325.3,176.0 340.5,190.0 347.2,204.0 351.2,218.0 355.9,232.0 360.5,246.0 364.2,260.0 366.0,274.0 365.9,288.0 365.5,302.0 365.5,316.0 366.5,330.0 367.6,344.0 367.9,358.0 366.8,372.0 365.0,386.0 363.4,400.0 362.7,414.0 362.4,428.0 361.6,442.0 359.9,456.0 357.4,470.0 354.7,484.0 352.5,498.0 350.4,512.0 344.8,526.0 337.4,540.0 330.2,554.0 323.1,561.5 M325.5,176.0 341.9,190.0 349.8,204.0 355.5,218.0 361.5,232.0 366.4,246.0 369.5,260.0 370.5,274.0 370.4,288.0 371.0,302.0 372.0,316.0 373.4,330.0 373.8,344.0 373.0,358.0 371.3,372.0 369.9,386.0 369.3,400.0 369.1,414.0 368.4,428.0 366.4,442.0 363.7,456.0 361.1,470.0 359.0,484.0 357.6,498.0 355.2,512.0 348.1,526.0 338.8,540.0 330.4,554.0 323.6,561.5 M325.0,176.0 343.5,190.0 353.4,204.0 360.5,218.0 367.0,232.0 371.3,246.0 373.7,260.0 374.9,274.0 375.7,288.0 377.4,302.0 378.8,316.0 379.5,330.0 378.8,344.0 377.5,358.0 376.2,372.0 375.9,386.0 375.8,400.0 375.2,414.0 373.2,428.0 370.2,442.0 367.4,456.0 365.6,470.0 364.3,484.0 362.7,498.0 359.2,512.0 350.3,526.0 339.7,540.0 331.3,554.0 324.1,561.5 M324.9,176.0 346.2,190.0 357.8,204.0 365.3,218.0 371.3,232.0 375.1,246.0 377.8,260.0 380.0,274.0 382.0,288.0 384.0,302.0 384.7,316.0 384.4,330.0 383.1,344.0 382.4,358.0 382.1,372.0 382.4,386.0 381.8,400.0 380.1,414.0 377.2,428.0 374.1,442.0 372.1,456.0 371.0,470.0 369.7,484.0 367.0,498.0 362.1,512.0 352.1,526.0 341.3,540.0 333.2,554.0 324.7,561.5 M325.8,176.0 349.7,190.0 362.0,204.0 369.0,218.0 374.6,232.0 378.7,246.0 382.6,260.0 386.0,274.0 388.4,288.0 389.7,302.0 389.4,316.0 388.6,330.0 387.9,344.0 388.3,358.0 388.6,372.0 388.4,386.0 386.7,400.0 384.0,414.0 381.1,428.0 378.8,442.0 377.6,456.0 376.5,470.0 374.0,484.0 370.0,498.0 364.5,512.0 354.5,526.0 344.0,540.0 335.6,554.0 325.2,561.5 M327.5,176.0 352.9,190.0 365.1,204.0 371.7,218.0 377.8,232.0 383.1,246.0 388.3,260.0 392.2,274.0 393.9,288.0 394.3,302.0 393.5,316.0 393.3,330.0 393.7,344.0 394.7,358.0 394.6,372.0 393.3,386.0 390.7,400.0 388.0,414.0 385.9,428.0 384.4,442.0 383.0,456.0 380.9,470.0 377.2,484.0 372.8,498.0 367.6,512.0 357.9,526.0 347.1,540.0 337.4,554.0 325.7,561.5 M329.0,176.0 355.1,190.0 367.1,204.0 374.3,218.0 381.7,232.0 388.5,246.0 394.2,260.0 397.5,274.0 398.2,288.0 398.2,302.0 398.1,316.0 399.0,330.0 400.0,344.0 400.6,358.0 399.3,372.0 397.2,386.0 394.6,400.0 392.9,414.0 391.5,428.0 389.8,442.0 387.5,456.0 384.2,470.0 380.1,484.0 376.1,498.0 371.7,512.0 361.8,526.0 349.5,540.0 338.1,554.0 326.1,561.5 M329.4,176.0 356.2,190.0 369.1,204.0 377.7,218.0 386.5,232.0 393.9,246.0 399.1,260.0 401.5,274.0 401.9,288.0 402.6,302.0 403.6,316.0 405.1,330.0 405.7,344.0 405.2,358.0 403.1,372.0 401.1,386.0 399.5,400.0 398.5,414.0 397.0,428.0 394.3,442.0 390.7,456.0 387.1,470.0 383.5,484.0 380.4,498.0 376.2,512.0 365.0,526.0 350.8,540.0 338.2,554.0 326.6,561.5 M328.9,176.0 357.3,190.0 371.9,204.0 381.9,218.0 391.5,232.0 398.3,246.0 402.8,260.0 405.0,274.0 406.1,288.0 407.9,302.0 409.5,316.0 410.6,330.0 410.1,344.0 408.9,358.0 407.0,372.0 405.9,386.0 405.1,400.0 404.0,414.0 401.5,428.0 397.6,442.0 393.7,456.0 390.6,470.0 388.0,484.0 385.0,498.0 379.9,512.0 367.0,526.0 351.5,540.0 338.5,554.0 327.1,561.5 M328.5,176.0 359.3,190.0 375.6,204.0 386.3,218.0 395.4,232.0 401.6,246.0 405.9,260.0 408.9,274.0 411.2,288.0 413.7,302.0 414.8,316.0 414.9,330.0 413.7,344.0 412.7,358.0 411.7,372.0 411.5,386.0 410.5,400.0 408.4,414.0 404.7,428.0 400.5,442.0 397.2,456.0 395.1,470.0 392.7,484.0 388.9,498.0 382.4,512.0 368.3,526.0 352.4,540.0 340.0,554.0 327.5,561.5 M329.0,176.0 362.2,190.0 379.4,204.0 389.7,218.0 398.2,232.0 404.3,246.0 409.5,260.0 413.8,274.0 416.7,288.0 418.8,302.0 418.9,316.0 418.2,330.0 417.3,344.0 417.3,358.0 417.1,372.0 416.8,386.0 414.8,400.0 411.6,414.0 407.6,428.0 404.1,442.0 401.7,456.0 399.8,470.0 396.6,484.0 391.6,498.0 384.2,512.0 369.9,526.0 354.5,540.0 342.1,554.0 327.9,561.5 M330.4,176.0 365.1,190.0 382.2,204.0 391.8,218.0 400.4,232.0 407.5,246.0 414.1,260.0 419.1,274.0 421.5,288.0 422.6,302.0 422.0,316.0 421.7,330.0 421.7,344.0 422.6,358.0 422.3,372.0 421.0,386.0 417.9,400.0 414.5,414.0 411.2,428.0 408.6,442.0 406.4,456.0 403.7,470.0 399.3,484.0 393.5,498.0 386.3,512.0 372.5,526.0 357.1,540.0 344.0,554.0 328.3,561.5 M331.9,176.0 367.1,190.0 383.8,204.0 393.6,218.0 403.2,232.0 411.7,246.0 419.0,260.0 423.6,274.0 425.0,288.0 425.5,302.0 425.2,316.0 426.0,330.0 426.8,344.0 427.6,358.0 426.3,372.0 424.0,386.0 420.7,400.0 418.0,414.0 415.7,428.0 413.2,442.0 410.3,456.0 406.4,470.0 401.3,484.0 395.8,498.0 389.4,512.0 375.8,526.0 359.5,540.0 344.7,554.0 328.7,561.5 M332.6,176.0 368.0,190.0 385.0,204.0 395.9,218.0 406.9,232.0 416.2,246.0 423.2,260.0 426.9,274.0 427.7,288.0 428.5,302.0 429.3,316.0 430.9,330.0 431.6,344.0 431.4,358.0 429.2,372.0 426.7,386.0 424.2,400.0 422.4,414.0 420.3,428.0 417.0,442.0 412.9,456.0 408.4,470.0 403.6,484.0 399.0,498.0 393.1,512.0 378.7,526.0 360.7,540.0 344.6,554.0 329.1,561.5 M332.1,176.0 368.5,190.0 386.8,204.0 399.1,218.0 411.0,232.0 420.0,246.0 426.0,260.0 429.2,274.0 430.4,288.0 432.4,302.0 434.0,316.0 435.5,330.0 435.3,344.0 434.1,358.0 431.7,372.0 430.0,386.0 428.5,400.0 426.9,414.0 424.0,428.0 419.5,442.0 414.8,456.0 410.7,470.0 406.8,484.0 402.8,498.0 396.4,512.0 380.3,526.0 361.0,540.0 344.5,554.0 329.4,561.5 M331.4,176.0 369.6,190.0 389.5,204.0 402.6,218.0 414.3,232.0 422.4,246.0 428.1,260.0 431.7,274.0 434.1,288.0 436.8,302.0 438.3,316.0 438.9,330.0 437.7,344.0 436.5,358.0 434.9,372.0 434.2,386.0 432.9,400.0 430.5,414.0 426.4,428.0 421.3,442.0 417.0,456.0 413.9,470.0 410.6,484.0 406.1,498.0 398.4,512.0 381.1,526.0 361.3,540.0 345.3,554.0 329.7,561.5 M331.4,176.0 371.7,190.0 392.6,204.0 405.4,218.0 416.3,232.0 424.0,246.0 430.3,260.0 435.1,274.0 438.3,288.0 440.9,302.0 441.4,316.0 441.1,330.0 439.9,344.0 439.5,358.0 439.0,372.0 438.4,386.0 436.3,400.0 432.8,414.0 428.1,428.0 423.5,442.0 420.2,456.0 417.6,470.0 413.8,484.0 408.1,498.0 399.4,512.0 381.8,526.0 362.5,540.0 347.0,554.0 330.0,561.5 M332.5,176.0 374.2,190.0 394.9,204.0 407.0,218.0 417.5,232.0 425.9,246.0 433.3,260.0 439.1,274.0 442.1,288.0 443.8,302.0 443.4,316.0 443.0,330.0 442.7,344.0 443.4,358.0 443.0,372.0 441.7,386.0 438.4,400.0 434.4,414.0 430.2,428.0 426.6,442.0 423.8,456.0 420.8,470.0 415.8,484.0 409.2,498.0 400.5,512.0 383.5,526.0 364.6,540.0 348.7,554.0 330.3,561.5 M334.0,176.0 375.9,190.0 396.0,204.0 407.7,218.0 418.9,232.0 428.6,246.0 437.0,260.0 442.6,274.0 444.6,288.0 445.5,302.0 445.1,316.0 445.6,330.0 446.3,344.0 447.2,358.0 446.0,372.0 443.6,386.0 439.9,400.0 436.4,414.0 433.2,428.0 430.1,442.0 426.9,456.0 422.7,470.0 416.8,484.0 410.3,498.0 402.4,512.0 385.9,526.0 366.6,540.0 349.5,554.0 330.6,561.5 M334.8,176.0 376.4,190.0 396.3,204.0 408.8,218.0 421.3,232.0 431.9,246.0 440.1,260.0 444.8,274.0 446.0,288.0 446.9,302.0 447.5,316.0 449.0,330.0 449.9,344.0 450.0,358.0 447.7,372.0 444.9,386.0 441.7,400.0 439.3,414.0 436.6,428.0 433.0,442.0 428.6,456.0 423.6,470.0 417.9,484.0 412.2,498.0 405.0,512.0 388.2,526.0 367.6,540.0 349.2,554.0 330.8,561.5 M334.4,176.0 376.2,190.0 397.0,204.0 410.7,218.0 424.2,232.0 434.6,246.0 442.0,260.0 445.9,274.0 447.2,288.0 449.1,302.0 450.6,316.0 452.4,330.0 452.4,344.0 451.4,358.0 448.8,372.0 446.5,386.0 444.4,400.0 442.5,414.0 439.3,428.0 434.6,442.0 429.4,456.0 424.5,470.0 419.7,484.0 414.8,498.0 407.5,512.0 389.5,526.0 367.6,540.0 348.6,554.0 331.0,561.5 M333.5,176.0 376.4,190.0 398.6,204.0 413.2,218.0 426.6,232.0 436.2,246.0 442.8,260.0 446.8,274.0 449.1,288.0 452.0,302.0 453.7,316.0 454.6,330.0 453.6,344.0 452.3,358.0 450.3,372.0 449.1,386.0 447.5,400.0 445.0,414.0 440.7,428.0 435.2,442.0 430.2,456.0 426.3,470.0 422.3,484.0 417.3,498.0 408.9,512.0 389.6,526.0 367.2,540.0 348.8,554.0 331.2,561.5 M333.0,176.0 377.6,190.0 400.8,204.0 415.3,218.0 427.7,232.0 436.6,246.0 443.4,260.0 448.5,274.0 451.7,288.0 454.7,302.0 455.7,316.0 455.5,330.0 454.2,344.0 453.5,358.0 452.6,372.0 451.9,386.0 449.8,400.0 446.2,414.0 441.2,428.0 435.8,442.0 431.8,456.0 428.7,470.0 424.6,484.0 418.6,498.0 409.1,512.0 389.4,526.0 367.6,540.0 350.0,554.0 331.4,561.5 M333.7,176.0 379.4,190.0 402.4,204.0 416.1,218.0 427.8,232.0 436.9,246.0 444.8,260.0 450.8,274.0 454.2,288.0 456.4,302.0 456.3,316.0 455.9,330.0 455.2,344.0 455.6,358.0 455.2,372.0 454.0,386.0 450.7,400.0 446.4,414.0 441.7,428.0 437.3,442.0 434.1,456.0 430.8,470.0 425.7,484.0 418.7,498.0 409.0,512.0 390.0,526.0 368.9,540.0 351.5,554.0 331.5,561.5 M334.9,176.0 380.7,190.0 402.9,204.0 415.8,218.0 427.8,232.0 438.0,246.0 446.9,260.0 453.0,274.0 455.6,288.0 456.8,302.0 456.4,316.0 456.7,330.0 457.1,344.0 458.0,358.0 457.0,372.0 454.7,386.0 450.8,400.0 446.8,414.0 443.0,428.0 439.4,442.0 436.0,456.0 431.8,470.0 425.7,484.0 418.5,498.0 409.6,512.0 391.4,526.0 370.5,540.0 352.2,554.0 331.6,561.5 M283.6,179.1 289.4,182.4 295.2,185.9 301.1,188.8 306.9,190.2 312.7,190.3 318.5,189.7 324.3,189.3 330.1,189.1 335.9,188.6 341.8,186.8 347.6,183.6 353.4,179.4 M270.0,185.1 278.1,187.2 286.2,189.3 294.3,191.7 302.3,194.0 310.4,195.5 318.5,195.5 326.6,194.3 334.7,192.7 342.7,191.5 350.8,190.4 358.9,188.6 367.0,185.5 M258.1,190.0 268.2,193.1 278.2,194.8 288.3,195.8 298.4,197.0 308.4,198.5 318.5,199.7 328.6,199.8 338.6,198.4 348.7,196.1 358.8,193.7 368.8,191.7 378.9,189.6 M248.9,193.2 260.5,197.0 272.1,200.1 283.7,201.7 295.3,202.1 306.9,202.2 318.5,202.5 330.1,203.1 341.7,203.1 353.3,201.9 364.9,199.2 376.5,195.9 388.1,192.8 M240.4,197.7 253.4,200.2 266.4,203.1 279.5,205.9 292.5,207.6 305.5,207.9 318.5,207.2 331.5,206.4 344.5,206.0 357.5,205.6 370.6,204.5 383.6,201.9 396.6,198.2 M234.9,203.8 248.8,205.6 262.8,207.1 276.7,208.8 290.6,210.8 304.6,212.4 318.5,212.8 332.4,211.8 346.4,210.2 360.3,208.7 374.2,207.6 388.2,206.3 402.1,204.0 M229.9,208.1 244.7,211.2 259.4,212.9 274.2,213.6 289.0,214.2 303.7,215.3 318.5,216.4 333.3,216.9 348.0,216.0 362.8,213.9 377.6,211.5 392.3,209.4 407.1,207.6 M225.3,211.3 240.8,214.6 256.4,217.5 271.9,219.3 287.4,219.8 303.0,219.6 318.5,219.5 334.0,219.8 349.6,220.1 365.1,219.4 380.6,217.3 396.2,214.3 411.7,211.2 M220.7,216.5 237.0,218.3 253.3,220.5 269.6,222.9 285.9,224.8 302.2,225.3 318.5,224.7 334.8,223.6 351.1,222.9 367.4,222.6 383.7,222.0 400.0,220.2 416.3,217.1 M216.1,222.4 233.2,224.1 250.2,225.0 267.3,226.1 284.4,227.7 301.4,229.3 318.5,230.0 335.6,229.4 352.6,227.8 369.7,226.1 386.8,224.9 403.8,223.9 420.9,222.3 M211.6,226.1 229.4,229.1 247.3,230.9 265.1,231.5 282.9,231.7 300.7,232.1 318.5,233.1 336.3,233.8 354.1,233.4 371.9,231.8 389.8,229.4 407.6,227.2 425.4,225.5 M207.6,229.6 226.1,232.2 244.6,234.9 263.1,236.8 281.5,237.5 300.0,237.1 318.5,236.6 337.0,236.6 355.5,236.9 373.9,236.7 392.4,235.3 410.9,232.7 429.4,229.8 M203.6,235.3 222.7,236.5 241.9,237.9 261.0,239.9 280.2,241.8 299.3,242.6 318.5,242.2 337.7,241.1 356.8,240.1 376.0,239.6 395.1,239.3 414.3,238.2 433.4,235.8 M200.2,240.8 219.9,242.5 239.6,243.1 259.3,243.6 279.1,244.6 298.8,246.0 318.5,247.0 338.2,246.8 357.9,245.5 377.7,243.8 397.4,242.4 417.1,241.5 436.8,240.5 M197.2,244.0 217.4,246.8 237.6,248.7 257.8,249.4 278.1,249.2 298.3,249.2 318.5,249.8 338.7,250.6 358.9,250.7 379.2,249.6 399.4,247.5 419.6,245.3 439.8,243.6 M194.2,248.1 214.9,249.9 235.6,252.1 256.3,254.1 277.1,255.0 297.8,254.7 318.5,253.9 339.2,253.5 359.9,253.7 380.7,253.9 401.4,253.1 422.1,251.2 442.8,248.5 M191.6,254.2 212.7,254.8 233.9,255.6 255.0,256.9 276.2,258.6 297.3,259.8 318.5,259.7 339.7,258.7 360.8,257.4 382.0,256.8 403.1,256.6 424.3,256.1 445.4,254.5 M189.1,259.0 210.6,260.7 232.2,261.3 253.8,261.3 275.4,261.7 296.9,262.7 318.5,263.8 340.1,264.1 361.6,263.2 383.2,261.5 404.8,260.0 426.4,259.1 447.9,258.5 M186.7,262.1 208.7,264.4 230.6,266.3 252.6,267.1 274.6,266.9 296.5,266.5 318.5,266.6 340.5,267.3 362.4,267.8 384.4,267.3 406.4,265.6 428.3,263.5 450.3,261.8 M185.1,266.8 207.4,267.7 229.6,269.4 251.8,271.2 274.0,272.3 296.3,272.3 318.5,271.4 340.7,270.7 363.0,270.6 385.2,270.9 407.4,270.8 429.6,269.5 451.9,267.3 M183.5,272.9 206.0,273.3 228.5,273.4 251.0,274.1 273.5,275.4 296.0,276.7 318.5,277.0 341.0,276.3 363.5,275.0 386.0,274.1 408.5,273.8 431.0,273.8 453.5,273.0 M182.2,277.0 205.0,278.7 227.7,279.3 250.4,279.1 273.1,279.0 295.8,279.5 318.5,280.5 341.2,281.1 363.9,280.8 386.6,279.4 409.3,277.8 432.0,276.8 454.8,276.5 M181.5,280.2 204.3,282.0 227.2,283.8 250.0,284.7 272.8,284.6 295.7,284.0 318.5,283.6 341.3,284.0 364.2,284.7 387.0,284.8 409.8,283.7 432.7,281.9 455.5,280.2 M180.8,285.6 203.7,285.8 226.7,286.7 249.6,288.2 272.6,289.4 295.5,289.7 318.5,289.0 341.5,288.0 364.4,287.6 387.4,287.9 410.3,288.2 433.3,287.7 456.2,286.2 M180.0,291.4 203.1,291.7 226.2,291.4 249.3,291.5 272.3,292.3 295.4,293.5 318.5,294.2 341.6,293.8 364.7,292.6 387.7,291.5 410.8,291.2 433.9,291.3 457.0,291.3 M179.3,295.0 202.5,296.6 225.7,297.3 248.9,297.0 272.1,296.4 295.3,296.4 318.5,297.1 341.7,298.0 364.9,298.2 388.1,297.3 411.3,295.8 434.5,294.7 457.7,294.4 M178.6,298.6 201.9,299.6 225.2,301.1 248.5,302.2 271.9,302.2 295.2,301.5 318.5,300.8 341.8,300.8 365.1,301.5 388.5,302.0 411.8,301.7 435.1,300.4 458.4,298.8 M178.3,304.4 201.7,304.1 225.0,304.2 248.4,305.2 271.8,306.4 295.1,307.0 318.5,306.5 341.9,305.5 365.2,304.8 388.6,304.9 412.0,305.5 435.3,305.7 458.7,304.9 M178.1,309.7 201.5,310.1 224.9,309.6 248.3,309.0 271.7,309.2 295.1,310.2 318.5,311.1 341.9,311.2 365.3,310.3 388.7,309.2 412.1,308.6 435.5,308.9 458.9,309.4 M177.8,312.9 201.3,314.3 224.7,315.0 248.2,314.9 271.6,314.1 295.1,313.5 318.5,313.9 341.9,314.8 365.4,315.4 388.8,315.1 412.3,313.9 435.7,312.9 459.2,312.5 M177.6,317.2 201.1,317.3 224.6,318.3 248.1,319.4 271.5,319.7 295.0,319.1 318.5,318.2 342.0,317.8 365.5,318.3 388.9,319.2 412.4,319.5 435.9,318.8 459.4,317.6 M177.4,323.2 200.9,322.5 224.4,321.9 247.9,322.2 271.5,323.2 295.0,324.0 318.5,324.0 342.0,323.1 365.5,322.2 389.1,322.1 412.6,322.8 436.1,323.5 459.6,323.6 M177.1,327.9 200.7,328.2 224.3,327.7 247.8,326.8 271.4,326.4 294.9,326.9 318.5,327.9 342.1,328.4 365.6,328.0 389.2,327.0 412.7,326.3 436.3,326.5 459.9,327.4 M177.0,331.0 200.6,331.8 224.2,332.6 247.8,332.6 271.3,331.8 294.9,330.9 318.5,330.7 342.1,331.5 365.7,332.4 389.2,332.7 412.8,332.1 436.4,331.2 460.0,330.8 M177.1,335.9 200.7,335.3 224.2,335.6 247.8,336.4 271.4,337.0 294.9,336.6 318.5,335.7 342.1,335.0 365.6,335.2 389.2,336.2 412.8,337.0 436.3,337.1 459.9,336.4 M177.2,341.9 200.7,340.9 224.3,339.8 247.8,339.5 271.4,340.0 294.9,340.9 318.5,341.2 342.1,340.7 365.6,339.8 389.2,339.4 412.7,340.0 436.3,341.2 459.8,342.0 M177.3,345.9 200.8,346.2 224.3,345.7 247.9,344.6 271.4,343.7 295.0,343.7 318.5,344.5 342.0,345.4 365.6,345.5 389.1,344.9 412.7,344.2 436.2,344.3 459.7,345.3 M177.3,349.2 200.9,349.4 224.4,350.0 247.9,350.1 271.4,349.4 295.0,348.4 318.5,347.8 342.0,348.2 365.6,349.3 389.1,350.1 412.6,350.1 436.1,349.6 459.7,349.3 M177.4,354.7 200.9,353.4 224.4,353.0 248.0,353.4 271.5,354.1 295.0,354.0 318.5,353.3 342.0,352.4 365.5,352.3 389.0,353.2 412.6,354.4 436.1,355.3 459.6,355.3 M177.5,360.4 201.0,359.3 224.5,357.9 248.0,356.9 271.5,356.9 295.0,357.7 318.5,358.3 342.0,358.2 365.5,357.5 389.0,357.0 412.5,357.4 436.0,358.7 459.5,360.2 M178.0,363.9 201.4,364.0 224.9,363.6 248.3,362.5 271.7,361.2 295.1,360.7 318.5,361.2 341.9,362.2 365.3,362.9 388.7,362.8 412.1,362.3 435.6,362.3 459.0,363.3 M178.6,367.6 202.0,367.0 225.3,367.3 248.6,367.5 271.9,367.0 295.2,365.9 318.5,365.0 341.8,365.1 365.1,366.1 388.4,367.4 411.7,368.0 435.0,368.0 458.4,367.9 M179.3,373.6 202.5,371.7 225.7,370.5 248.9,370.4 272.1,371.0 295.3,371.3 318.5,370.8 341.7,369.9 364.9,369.5 388.1,370.2 411.3,371.7 434.5,373.2 457.7,374.0 M179.9,378.7 203.0,377.6 226.1,376.0 249.2,374.5 272.3,373.9 295.4,374.4 318.5,375.2 341.6,375.5 364.7,375.2 387.8,374.7 410.9,374.9 434.0,376.3 457.1,378.3 M180.5,381.8 203.5,381.7 226.5,381.3 249.5,380.3 272.5,378.9 295.5,377.9 318.5,378.0 341.5,379.0 364.5,380.0 387.5,380.5 410.5,380.4 433.5,380.4 456.5,381.5 M181.1,386.2 204.0,384.8 226.9,384.5 249.8,384.7 272.7,384.4 295.6,383.5 318.5,382.5 341.4,382.1 364.3,382.9 387.2,384.4 410.1,385.8 433.0,386.4 455.9,386.7 M181.9,392.3 204.6,390.1 227.4,388.3 250.2,387.5 273.0,387.8 295.7,388.3 318.5,388.2 341.3,387.5 364.0,387.0 386.8,387.4 409.6,389.0 432.4,391.0 455.1,392.6 M182.9,396.8 205.5,395.8 228.1,394.1 250.7,392.2 273.3,391.1 295.9,391.1 318.5,391.9 341.1,392.7 363.7,392.8 386.3,392.5 408.9,392.7 431.5,394.0 454.1,396.3 M184.0,399.9 206.4,399.2 228.8,398.9 251.3,398.0 273.7,396.6 296.1,395.3 318.5,394.9 340.9,395.7 363.3,397.0 385.7,398.1 408.2,398.5 430.6,398.8 453.0,399.8 M185.1,405.0 207.3,402.8 229.6,401.8 251.8,401.7 274.0,401.7 296.3,401.0 318.5,400.0 340.7,399.4 363.0,399.9 385.2,401.4 407.4,403.3 429.7,404.7 451.9,405.5 M186.2,411.0 208.2,408.6 230.3,406.2 252.3,404.8 274.4,404.6 296.4,405.1 318.5,405.4 340.6,405.1 362.6,404.6 384.7,404.8 406.7,406.3 428.8,408.6 450.8,411.0 M187.2,414.8 209.1,413.7 231.0,412.1 252.9,410.1 274.7,408.5 296.6,408.0 318.5,408.6 340.4,409.6 362.3,410.3 384.1,410.4 406.0,410.6 427.9,411.8 449.8,414.2 M188.3,418.2 210.0,416.8 231.7,416.2 253.4,415.5 275.1,414.2 296.8,412.8 318.5,412.0 340.2,412.4 361.9,413.9 383.6,415.5 405.3,416.5 427.0,417.2 448.7,418.3 M189.8,423.8 211.2,421.0 232.7,419.2 254.1,418.7 275.6,418.7 297.0,418.4 318.5,417.5 340.0,416.8 361.4,417.0 382.9,418.4 404.3,420.7 425.8,422.8 447.2,424.4 M191.3,429.4 212.5,427.0 233.7,424.3 254.9,422.3 276.1,421.5 297.3,421.8 318.5,422.4 339.7,422.5 360.9,422.3 382.1,422.4 403.3,423.7 424.5,426.2 445.7,429.2 M192.8,432.7 213.8,431.5 234.7,430.0 255.7,428.0 276.6,426.0 297.6,425.0 318.5,425.3 339.4,426.4 360.4,427.6 381.3,428.2 402.3,428.7 423.2,429.8 444.2,432.3 M194.4,436.7 215.1,434.5 235.7,433.5 256.4,432.8 277.1,431.8 297.8,430.4 318.5,429.3 339.2,429.3 359.9,430.7 380.6,432.7 401.3,434.4 421.9,435.7 442.6,437.0 M195.9,442.7 216.3,439.3 236.8,436.8 257.2,435.7 277.6,435.6 298.1,435.5 318.5,435.0 338.9,434.3 359.4,434.3 379.8,435.5 400.2,437.9 420.7,440.7 441.1,443.1 M197.4,447.6 217.6,445.2 237.8,442.4 258.0,439.9 278.1,438.6 298.3,438.5 318.5,439.3 338.7,439.8 358.9,440.0 379.0,440.1 399.2,441.3 419.4,443.7 439.6,447.2 M198.8,450.8 218.8,449.1 238.7,447.6 258.7,445.8 278.6,443.7 298.6,442.2 318.5,442.1 338.4,443.1 358.4,444.7 378.3,445.9 398.3,446.8 418.2,448.0 438.2,450.4 M200.2,455.3 219.9,452.3 239.7,450.7 259.4,450.0 279.1,449.2 298.8,447.9 318.5,446.7 338.2,446.4 357.9,447.5 377.6,449.7 397.3,452.1 417.1,454.0 436.8,455.8 M201.6,461.4 221.1,457.7 240.6,454.6 260.1,452.9 279.5,452.4 299.0,452.5 318.5,452.4 338.0,451.9 357.5,451.8 376.9,452.8 396.4,455.2 415.9,458.4 435.4,461.6 M203.0,465.7 222.3,463.3 241.5,460.5 260.8,457.7 280.0,455.8 299.3,455.3 318.5,456.0 337.7,456.9 357.0,457.6 376.2,458.0 395.5,459.0 414.7,461.4 434.0,465.2 M204.4,468.9 223.4,466.7 242.5,465.1 261.5,463.4 280.5,461.4 299.5,459.6 318.5,459.0 337.5,459.9 356.5,461.6 375.5,463.5 394.5,464.9 413.6,466.4 432.6,468.8 M206.2,474.1 224.9,470.3 243.6,468.0 262.3,467.0 281.1,466.3 299.8,465.4 318.5,464.3 337.2,463.7 355.9,464.5 374.7,466.7 393.4,469.6 412.1,472.3 430.8,474.7 M207.9,480.0 226.3,476.2 244.8,472.6 263.2,470.2 281.6,469.2 300.1,469.3 318.5,469.6 336.9,469.5 355.4,469.4 373.8,470.2 392.2,472.5 410.7,476.0 429.1,479.9 M209.6,483.7 227.8,481.2 245.9,478.5 264.1,475.6 282.2,473.2 300.4,472.2 318.5,472.6 336.6,473.9 354.8,475.0 372.9,475.9 391.1,477.0 409.2,479.3 427.4,483.1 M211.3,487.2 229.2,484.2 247.1,482.4 264.9,480.9 282.8,479.0 300.6,477.2 318.5,476.2 336.4,476.7 354.2,478.5 372.1,480.8 389.9,482.9 407.8,484.8 425.7,487.4 M213.1,492.9 230.6,488.6 248.2,485.5 265.8,484.0 283.4,483.3 300.9,482.7 318.5,481.8 336.1,481.2 353.6,481.7 371.2,483.7 388.8,486.9 406.4,490.3 423.9,493.5 M215.6,498.4 232.8,494.6 249.9,490.7 267.1,487.7 284.2,486.2 301.4,486.0 318.5,486.5 335.6,486.9 352.8,487.1 369.9,487.8 387.1,489.9 404.2,493.6 421.4,498.1 M218.6,501.6 235.2,498.9 251.9,496.3 268.5,493.5 285.2,490.8 301.8,489.3 318.5,489.4 335.2,490.6 351.8,492.3 368.5,493.7 385.1,495.1 401.8,497.4 418.4,501.2 M221.5,505.7 237.6,502.0 253.8,499.7 270.0,498.1 286.2,496.5 302.3,494.8 318.5,493.5 334.7,493.6 350.8,495.3 367.0,497.9 383.2,500.7 399.4,503.3 415.5,506.1 M224.4,511.8 240.1,506.9 255.7,503.2 271.4,501.0 287.1,500.2 302.8,499.8 318.5,499.3 334.2,498.7 349.9,499.0 365.6,500.8 381.3,504.1 396.9,508.2 412.6,512.1 M229.5,516.6 244.3,512.8 259.1,508.9 274.0,505.4 288.8,503.3 303.7,502.7 318.5,503.3 333.3,504.2 348.2,504.8 363.0,505.6 377.9,507.6 392.7,511.2 407.5,516.1 M236.0,519.7 249.7,516.5 263.5,513.9 277.2,511.2 291.0,508.5 304.7,506.6 318.5,506.2 332.3,507.3 346.0,509.3 359.8,511.4 373.5,513.2 387.3,515.6 401.0,519.4 M242.5,524.4 255.2,519.8 267.8,516.9 280.5,515.2 293.2,513.9 305.8,512.3 318.5,511.0 331.2,510.8 343.8,512.2 356.5,515.0 369.2,518.4 381.8,521.6 394.5,524.9 M250.0,530.5 261.4,525.4 272.8,521.0 284.2,518.2 295.7,517.0 307.1,516.7 318.5,516.6 329.9,516.3 341.3,516.6 352.8,518.1 364.2,521.4 375.6,525.8 387.0,530.6 M257.4,534.6 267.6,530.8 277.8,526.9 287.9,523.2 298.1,520.5 308.3,519.5 318.5,520.0 328.7,521.2 338.9,522.3 349.1,523.5 359.2,525.4 369.4,528.9 379.6,534.0 M264.6,537.8 273.6,534.1 282.6,531.3 291.6,528.8 300.5,526.2 309.5,524.0 318.5,523.2 327.5,524.1 336.5,526.2 345.4,528.8 354.4,531.3 363.4,534.0 372.4,537.8 M270.8,543.2 278.7,537.9 286.7,534.3 294.6,532.2 302.6,531.0 310.5,529.8 318.5,528.6 326.5,528.1 334.4,529.2 342.4,532.0 350.3,535.8 358.3,539.8 366.2,543.8 M276.5,549.0 283.5,543.8 290.5,539.0 297.5,535.6 304.5,533.8 311.5,533.5 318.5,533.7 325.5,533.9 332.5,534.2 339.5,535.6 346.5,538.7 353.5,543.4 360.5,548.9 M283.4,552.6 289.3,548.7 295.1,544.9 301.0,541.1 306.8,538.0 312.7,536.5 318.5,536.7 324.3,538.1 330.2,539.7 336.0,541.4 341.9,543.4 347.7,546.8 353.6,552.0 M291.9,556.2 296.3,551.7 300.8,548.6 305.2,546.2 309.6,543.8 314.1,541.6 318.5,540.4 322.9,540.9 327.4,543.1 331.8,546.1 336.2,549.3 340.7,552.5 345.1,556.4" fill="none" stroke="#fff" stroke-width=".62"/>
  <clipPath id="hc"><use href="#headp"/></clipPath>
  <clipPath id="nc"><use href="#neckp"/></clipPath>
</defs>
<rect x="24" y="137" width="590" height="532" fill="#030303"/>
<g filter="url(#b05)">
<!-- neck + shoulders -->
<use href="#neckp" fill="url(#ng)"/>
<g clip-path="url(#nc)">
  <ellipse cx="320" cy="565" rx="95" ry="26" fill="#0a0a0a" filter="url(#b8)"/>
  <ellipse cx="320" cy="625" rx="34" ry="42" fill="#606060" opacity=".75" filter="url(#b8)"/>
  <ellipse cx="92" cy="652" rx="80" ry="17" fill="#9a9a9a" opacity=".8" filter="url(#b5)"/>
  <ellipse cx="552" cy="654" rx="72" ry="17" fill="#909090" opacity=".8" filter="url(#b5)"/>
  <ellipse cx="232" cy="590" rx="12" ry="40" fill="#101010" opacity=".5" filter="url(#b5)"/>
  <ellipse cx="408" cy="590" rx="12" ry="40" fill="#101010" opacity=".5" filter="url(#b5)"/>
  <ellipse cx="180" cy="625" rx="45" ry="12" fill="#6a6a6a" opacity=".6" filter="url(#b5)" transform="rotate(-18 180 625)"/>
  <ellipse cx="462" cy="622" rx="45" ry="12" fill="#6a6a6a" opacity=".6" filter="url(#b5)" transform="rotate(18 462 622)"/>
  <path d="M226.5,508 C226.5,580 213.5,610 3.5,669 M230.7,508 C230.7,580 218.3,610 28.2,669 M234.9,508 C234.9,580 223.0,610 51.8,669 M239.0,508 C239.0,580 227.8,610 74.3,669 M243.2,508 C243.2,580 232.6,610 95.8,669 M247.4,508 C247.4,580 237.4,610 116.2,669 M251.6,508 C251.6,580 242.1,610 135.6,669 M255.8,508 C255.8,580 246.9,610 154.0,669 M260.0,508 C260.0,580 251.7,610 171.3,669 M264.1,508 C264.1,580 256.5,610 187.7,669 M268.3,508 C268.3,580 261.2,610 203.1,669 M272.5,508 C272.5,580 266.0,610 217.5,669 M276.7,508 C276.7,580 270.8,610 230.9,669 M280.9,508 C280.9,580 275.5,610 243.5,669 M285.0,508 C285.0,580 280.3,610 255.1,669 M289.2,508 C289.2,580 285.1,610 265.8,669 M293.4,508 C293.4,580 289.9,610 275.7,669 M297.6,508 C297.6,580 294.6,610 284.7,669 M301.8,508 C301.8,580 299.4,610 292.9,669 M306.0,508 C306.0,580 304.2,610 300.3,669 M310.1,508 C310.1,580 309.0,610 307.0,669 M314.3,508 C314.3,580 313.7,610 313.1,669 M318.5,508 C318.5,580 318.5,610 318.5,669 M322.7,508 C322.7,580 323.3,610 323.9,669 M326.9,508 C326.9,580 328.0,610 330.0,669 M331.0,508 C331.0,580 332.8,610 336.7,669 M335.2,508 C335.2,580 337.6,610 344.1,669 M339.4,508 C339.4,580 342.4,610 352.3,669 M343.6,508 C343.6,580 347.1,610 361.3,669 M347.8,508 C347.8,580 351.9,610 371.2,669 M352.0,508 C352.0,580 356.7,610 381.9,669 M356.1,508 C356.1,580 361.5,610 393.5,669 M360.3,508 C360.3,580 366.2,610 406.1,669 M364.5,508 C364.5,580 371.0,610 419.5,669 M368.7,508 C368.7,580 375.8,610 433.9,669 M372.9,508 C372.9,580 380.5,610 449.3,669 M377.0,508 C377.0,580 385.3,610 465.7,669 M381.2,508 C381.2,580 390.1,610 483.0,669 M385.4,508 C385.4,580 394.9,610 501.4,669 M389.6,508 C389.6,580 399.6,610 520.8,669 M393.8,508 C393.8,580 404.4,610 541.2,669 M398.0,508 C398.0,580 409.2,610 562.7,669 M402.1,508 C402.1,580 414.0,610 585.2,669 M406.3,508 C406.3,580 418.7,610 608.8,669 M410.5,508 C410.5,580 423.5,610 633.5,669 M223.5,512.0 Q318.5,526.0 413.5,512.0 M223.5,519.0 Q318.5,533.0 413.5,519.0 M223.5,526.0 Q318.5,540.0 413.5,526.0 M223.5,533.0 Q318.5,547.0 413.5,533.0 M223.5,540.0 Q318.5,554.0 413.5,540.0 M223.5,547.0 Q318.5,561.0 413.5,547.0 M223.5,554.0 Q318.5,568.0 413.5,554.0 M223.5,561.0 Q318.5,575.0 413.5,561.0 M223.5,568.0 Q318.5,582.0 413.5,568.0 M223.5,575.0 Q318.5,589.0 413.5,575.0 M223.5,582.0 Q318.5,596.0 413.5,582.0 M223.5,589.0 Q318.5,603.0 413.5,589.0 M209.0,597.7 Q318.5,610.0 428.0,597.7 M175.5,608.8 Q318.5,617.0 461.5,608.8 M130.0,621.2 Q318.5,624.0 507.0,621.2 M74.6,634.9 Q318.5,631.0 562.4,634.9 M10.7,649.5 Q318.5,638.0 626.3,649.5 M-61.0,665.1 Q318.5,645.0 698.0,665.1 M-139.7,681.6 Q318.5,652.0 776.7,681.6 M-225.0,698.8 Q318.5,659.0 862.0,698.8 M-316.6,716.8 Q318.5,666.0 953.6,716.8 M-414.0,735.5 Q318.5,673.0 1051.0,735.5 M-517.0,754.9 Q318.5,680.0 1154.0,754.9" fill="none" stroke="#e8e8e8" stroke-width=".55" opacity=".3"/>
</g>
<!-- ears -->
<path d="M184,366 C170,356 158,366 160,388 C162,412 166,440 174,455 C180,463 190,462 194,452 L198,380 Z" fill="#747474"/>
<path d="M182,376 C173,372 168,380 170,396 C172,416 176,438 182,448 L192,440 L192,386 Z" fill="#262626" filter="url(#b2)"/>
<path d="M163,380 C162,400 166,430 173,450" stroke="#b0b0b0" stroke-width="1.6" fill="none" filter="url(#b1)"/>
<path d="M454,366 C468,355 480,366 478,388 C476,412 470,440 462,455 C456,463 446,462 442,452 L438,380 Z" fill="#4a4642"/>
<path d="M456,376 C465,372 470,380 468,396 C466,416 462,438 456,448 L446,440 L446,386 Z" fill="#161616" filter="url(#b2)"/>
<path d="M474,374 C479,384 477,404 471,430" stroke="#a89c88" stroke-width="1.6" fill="none" filter="url(#b1)"/>
<!-- head -->
<g clip-path="url(#hc)">
  <use href="#headp" fill="url(#hg)"/>
  <!-- side darkening -->
  <ellipse cx="182" cy="370" rx="20" ry="150" fill="#101010" opacity=".8" filter="url(#b8)"/>
  <ellipse cx="212" cy="235" rx="16" ry="50" fill="#101010" opacity=".6" filter="url(#b8)" transform="rotate(28 212 235)"/>
  <ellipse cx="426" cy="235" rx="16" ry="50" fill="#101010" opacity=".65" filter="url(#b8)" transform="rotate(-28 426 235)"/>
  <ellipse cx="454" cy="370" rx="24" ry="150" fill="#120e0a" opacity=".88" filter="url(#b8)"/>
  <ellipse cx="212" cy="510" rx="22" ry="50" fill="#141414" opacity=".7" filter="url(#b8)"/>
  <ellipse cx="426" cy="510" rx="22" ry="50" fill="#141414" opacity=".7" filter="url(#b8)"/>
  <path d="M448,300 C452,350 448,420 436,470" stroke="#8a6a48" stroke-width="5" fill="none" opacity=".55" filter="url(#b3)"/>
  <!-- forehead highlights -->
  <ellipse cx="320" cy="214" rx="60" ry="20" fill="#f4f4f4" opacity=".85" filter="url(#b8)"/>
  <ellipse cx="320" cy="264" rx="66" ry="18" fill="#ececec" opacity=".8" filter="url(#b8)"/>
  <ellipse cx="318" cy="238" rx="100" ry="56" fill="#dcdcdc" opacity=".62" filter="url(#b12)"/>
  <ellipse cx="319" cy="293" rx="14" ry="12" fill="#d8d8d8" opacity=".7" filter="url(#b5)"/>
  <!-- brow / eye sockets -->
  <ellipse cx="254" cy="334" rx="46" ry="27" fill="#0c0c0c" opacity=".55" filter="url(#b5)"/>
  <ellipse cx="384" cy="336" rx="46" ry="27" fill="#0c0c0c" opacity=".55" filter="url(#b5)"/>
  <path d="M206,326 C212,304 240,296 272,300 C292,303 302,314 304,338 C302,350 294,350 290,344 C282,324 262,314 236,318 C220,320 212,332 206,326Z" fill="#080808" opacity=".88" filter="url(#b3)"/>
  <path d="M431,328 C425,306 397,298 365,302 C345,305 335,316 333,340 C335,352 343,352 347,346 C355,326 375,316 401,320 C417,322 425,334 431,328Z" fill="#080808" opacity=".88" filter="url(#b3)"/>
  <ellipse cx="213" cy="345" rx="9" ry="20" fill="#101010" opacity=".7" filter="url(#b5)"/>
  <ellipse cx="296" cy="332" rx="7" ry="17" fill="#080808" opacity=".8" filter="url(#b3)"/>
  <ellipse cx="341" cy="334" rx="7" ry="17" fill="#080808" opacity=".8" filter="url(#b3)"/>
  <ellipse cx="426" cy="347" rx="9" ry="20" fill="#101010" opacity=".7" filter="url(#b5)"/>
  <ellipse cx="250" cy="333" rx="21" ry="9" fill="#b4b4b4" opacity=".85" filter="url(#b3)"/>
  <ellipse cx="387" cy="335" rx="21" ry="9" fill="#b4b4b4" opacity=".85" filter="url(#b3)"/>
  <path d="M220,351 Q252,360 288,349" stroke="#050505" stroke-width="5" fill="none" filter="url(#b2)"/>
  <path d="M356,350 Q388,362 418,355" stroke="#050505" stroke-width="5" fill="none" filter="url(#b2)"/>
  <path d="M223,350.5 Q252,355 283,349" stroke="#e2e2e2" stroke-width="1.9" fill="none" filter="url(#b1)"/>
  <path d="M360,350 Q390,357 415,353" stroke="#e2e2e2" stroke-width="1.9" fill="none" filter="url(#b1)"/>
  <ellipse cx="252" cy="368" rx="32" ry="9" fill="#141414" opacity=".7" filter="url(#b5)"/>
  <ellipse cx="388" cy="370" rx="32" ry="9" fill="#141414" opacity=".7" filter="url(#b5)"/>
  <!-- nose -->
  <path d="M312,300 L326,300 L328,372 L308,372Z" fill="#e0e0e0" opacity=".85" filter="url(#b3)"/>
  <ellipse cx="297" cy="372" rx="6" ry="26" fill="#2c2c2c" opacity=".6" filter="url(#b5)"/>
  <ellipse cx="340" cy="372" rx="6" ry="26" fill="#2c2c2c" opacity=".6" filter="url(#b5)"/>
  <ellipse cx="288" cy="404" rx="8" ry="8" fill="#a8a8a8" opacity=".8" filter="url(#b3)"/>
  <ellipse cx="347" cy="406" rx="8" ry="8" fill="#a8a8a8" opacity=".8" filter="url(#b3)"/>
  <ellipse cx="316" cy="387" rx="13" ry="11" fill="#fafafa" opacity=".95" filter="url(#b5)"/>
  <path d="M283,408 C290,400 300,404 306,411 C312,417 322,417 328,411 C334,404 344,401 352,409 C351,424 339,436 318,440 C298,436 285,424 283,408Z" fill="#060606" filter="url(#b2)"/>
  <ellipse cx="292" cy="396" rx="5" ry="9" fill="#202020" opacity=".6" filter="url(#b3)"/>
  <ellipse cx="343" cy="397" rx="5" ry="9" fill="#202020" opacity=".6" filter="url(#b3)"/>
  <ellipse cx="317" cy="412" rx="6.5" ry="5" fill="#b4b4b4" filter="url(#b2)"/>
  <!-- cheeks -->
  <ellipse cx="250" cy="415" rx="34" ry="44" fill="#c4c4c4" opacity=".5" filter="url(#b8)"/>
  <ellipse cx="388" cy="415" rx="34" ry="44" fill="#c4c4c4" opacity=".5" filter="url(#b8)"/>
  <!-- mouth -->
  <ellipse cx="318" cy="449" rx="22" ry="6" fill="#b0b0b0" opacity=".6" filter="url(#b3)"/>
  <ellipse cx="318" cy="463" rx="48" ry="6.5" fill="#0e0e0e" opacity=".85" filter="url(#b2)"/>
  <path d="M268,468 Q295,460 318,465 Q342,460 370,468 Q342,474 318,473 Q295,474 268,468Z" fill="#000" filter="url(#b1)"/>
  <ellipse cx="318" cy="483" rx="38" ry="10" fill="#7c7c7c" opacity=".9" filter="url(#b3)"/>
  <ellipse cx="318" cy="476.5" rx="22" ry="4" fill="#ececec" opacity=".9" filter="url(#b2)"/>
  <ellipse cx="318" cy="503" rx="30" ry="7" fill="#000" opacity=".96" filter="url(#b2)"/>
  <ellipse cx="264" cy="470" rx="8" ry="9" fill="#101010" opacity=".6" filter="url(#b3)"/>
  <ellipse cx="373" cy="470" rx="8" ry="9" fill="#101010" opacity=".6" filter="url(#b3)"/>
  <ellipse cx="317" cy="523" rx="26" ry="12" fill="#bcbcbc" opacity=".8" filter="url(#b5)"/>
  <ellipse cx="318" cy="548" rx="60" ry="6" fill="#161616" opacity=".45" filter="url(#b5)"/>
  <!-- mesh -->
  <use href="#msh" opacity=".2"/>
  <use href="#msh" opacity=".75" style="mix-blend-mode:overlay"/>
  <path d="M256.5,190.0 Q318.5,228.0 380.5,184.0 M256.5,184.0 Q318.5,160.0 380.5,194.0 M240.9,198.0 Q318.5,236.0 396.1,192.0 M240.9,192.0 Q318.5,168.0 396.1,202.0 M231.5,206.0 Q318.5,244.0 405.5,200.0 M231.5,200.0 Q318.5,176.0 405.5,210.0 M223.5,214.0 Q318.5,252.0 413.5,208.0 M223.5,208.0 Q318.5,184.0 413.5,218.0 M215.5,222.0 Q318.5,260.0 421.5,216.0 M215.5,216.0 Q318.5,192.0 421.5,226.0 M208.1,230.0 Q318.5,268.0 428.9,224.0 M208.1,224.0 Q318.5,200.0 428.9,234.0 M201.3,238.0 Q318.5,276.0 435.7,232.0 M201.3,232.0 Q318.5,208.0 435.7,242.0 M196.1,246.0 Q318.5,284.0 440.9,240.0 M196.1,240.0 Q318.5,216.0 440.9,250.0 M191.3,254.0 Q318.5,292.0 445.7,248.0 M191.3,248.0 Q318.5,224.0 445.7,258.0 M187.0,262.0 Q318.5,300.0 450.0,256.0 M187.0,256.0 Q318.5,232.0 450.0,266.0 M184.2,270.0 Q318.5,308.0 452.8,264.0 M184.2,264.0 Q318.5,240.0 452.8,274.0 M182.0,278.0 Q318.5,316.0 455.0,272.0 M182.0,272.0 Q318.5,248.0 455.0,282.0 M180.7,286.0 Q318.5,324.0 456.3,280.0 M180.7,280.0 Q318.5,256.0 456.3,290.0 M179.5,294.0 Q318.5,332.0 457.5,288.0 M179.5,288.0 Q318.5,264.0 457.5,298.0 M178.4,302.0 Q318.5,340.0 458.6,296.0 M178.4,296.0 Q318.5,272.0 458.6,306.0 M178.0,310.0 Q318.5,348.0 459.0,304.0 M178.0,304.0 Q318.5,280.0 459.0,314.0 M177.6,318.0 Q318.5,356.0 459.4,312.0 M177.6,312.0 Q318.5,288.0 459.4,322.0 M177.2,326.0 Q318.5,364.0 459.8,320.0 M177.2,320.0 Q318.5,296.0 459.8,330.0 M177.1,334.0 Q318.5,372.0 459.9,328.0 M177.1,328.0 Q318.5,304.0 459.9,338.0 M177.2,342.0 Q318.5,380.0 459.8,336.0 M177.2,336.0 Q318.5,312.0 459.8,346.0 M177.3,350.0 Q318.5,388.0 459.7,344.0 M177.3,344.0 Q318.5,320.0 459.7,354.0 M177.5,358.0 Q318.5,396.0 459.5,352.0 M177.5,352.0 Q318.5,328.0 459.5,362.0 M178.3,366.0 Q318.5,404.0 458.7,360.0 M178.3,360.0 Q318.5,336.0 458.7,370.0 M179.4,374.0 Q318.5,412.0 457.6,368.0 M179.4,368.0 Q318.5,344.0 457.6,378.0 M180.4,382.0 Q318.5,420.0 456.6,376.0 M180.4,376.0 Q318.5,352.0 456.6,386.0 M181.5,390.0 Q318.5,428.0 455.5,384.0 M181.5,384.0 Q318.5,360.0 455.5,394.0 M183.4,398.0 Q318.5,436.0 453.6,392.0 M183.4,392.0 Q318.5,368.0 453.6,402.0 M185.2,406.0 Q318.5,444.0 451.8,400.0 M185.2,400.0 Q318.5,376.0 451.8,410.0 M187.1,414.0 Q318.5,452.0 449.9,408.0 M187.1,408.0 Q318.5,384.0 449.9,418.0 M189.2,422.0 Q318.5,460.0 447.8,416.0 M189.2,416.0 Q318.5,392.0 447.8,426.0 M191.8,430.0 Q318.5,468.0 445.2,424.0 M191.8,424.0 Q318.5,400.0 445.2,434.0 M194.5,438.0 Q318.5,476.0 442.5,432.0 M194.5,432.0 Q318.5,408.0 442.5,442.0 M197.2,446.0 Q318.5,484.0 439.8,440.0 M197.2,440.0 Q318.5,416.0 439.8,450.0 M199.6,454.0 Q318.5,492.0 437.4,448.0 M199.6,448.0 Q318.5,424.0 437.4,458.0 M202.1,462.0 Q318.5,500.0 434.9,456.0 M202.1,456.0 Q318.5,432.0 434.9,466.0 M204.5,470.0 Q318.5,508.0 432.5,464.0 M204.5,464.0 Q318.5,440.0 432.5,474.0 M207.5,478.0 Q318.5,516.0 429.5,472.0 M207.5,472.0 Q318.5,448.0 429.5,482.0 M210.5,486.0 Q318.5,524.0 426.5,480.0 M210.5,480.0 Q318.5,456.0 426.5,490.0 M213.5,494.0 Q318.5,532.0 423.5,488.0 M213.5,488.0 Q318.5,464.0 423.5,498.0 M218.6,502.0 Q318.5,540.0 418.4,496.0 M218.6,496.0 Q318.5,472.0 418.4,506.0 M223.6,510.0 Q318.5,548.0 413.4,504.0 M223.6,504.0 Q318.5,480.0 413.4,514.0 M232.6,518.0 Q318.5,556.0 404.4,512.0 M232.6,512.0 Q318.5,488.0 404.4,522.0 M244.1,526.0 Q318.5,564.0 392.9,520.0 M244.1,520.0 Q318.5,496.0 392.9,530.0 M257.1,534.0 Q318.5,572.0 379.9,528.0 M257.1,528.0 Q318.5,504.0 379.9,538.0 M269.0,542.0 Q318.5,580.0 368.0,536.0 M269.0,536.0 Q318.5,512.0 368.0,546.0 M279.5,550.0 Q318.5,588.0 357.5,544.0 M279.5,544.0 Q318.5,520.0 357.5,554.0" fill="none" stroke="#fff" stroke-width=".45" opacity=".24"/>
</g>
<use href="#headp" fill="none" stroke="#c0c0c0" stroke-width=".8" opacity=".28"/>
</g>
</svg>
</div>
<div style="left:591.0px;top:26.5px;width:1.6px;height:541.0px;background:#2e2e30;"></div>
<div style="left:593.0px;top:14.0px;width:184.5px;height:330.0px;background:#383838;"></div>
<div style="left:593.0px;top:15.0px;width:184.5px;height:11.5px;background:#262628;"></div>
<div style="left:593.0px;top:15.5px;width:51.0px;height:11.0px;background:#3a3a3c;"></div>
<div class="t" style="left:596.0px;top:16.0px;height:10px;line-height:10px;font-size:6px;color:#999;">&#9776;</div>
<div class="t" style="left:605.0px;top:16.3px;height:10px;line-height:10px;font-size:7.3px;color:#cfcfcf;">Hierarchy</div>
<div class="t" style="left:758.0px;top:16.0px;height:10px;line-height:10px;font-size:8px;color:#aaa;">a</div>
<div class="t" style="left:767.5px;top:16.0px;height:10px;line-height:10px;font-size:8px;color:#bbb;">&#8942;</div>
<div class="b" style="left:594.5px;top:27.0px;height:10px;line-height:10px;font-size:12px;color:#eee;font-size:12px;">+</div>
<div class="t" style="left:604.0px;top:27.3px;height:10px;line-height:10px;font-size:7px;color:#e0e0e0;">&#9662;</div>
<div style="left:616.0px;top:28.0px;width:160.0px;height:8.0px;background:#2c2c2e;border-radius:2px;"></div>
<div class="t" style="left:620.0px;top:27.0px;height:10px;line-height:10px;font-size:6px;color:#888;">&#9906;</div>
<div class="t" style="left:628.0px;top:27.2px;height:10px;line-height:10px;font-size:6.1px;color:#666;">All</div>
<div style="left:593.0px;top:38.5px;width:184.5px;height:9.0px;background:#4a4a4c;"></div>
<div class="t" style="left:611.0px;top:38.0px;height:10px;line-height:10px;font-size:6px;color:#888;">&#9662;</div>
<div style="left:618.5px;top:38.3px;width:9px;height:9px;"><svg width="9" height="9" viewBox="0 0 9 9"><g fill="none" stroke="#ececec" stroke-width="1.3" stroke-linejoin="round"><path d="M1,4.5 L4,1.5 L7.6,1 L8.2,4.5 L7.6,8 L4,7.5 Z"/><path d="M1,4.5 H5.2 M7.6,1 L5.2,4.5 L7.6,8"/></g></svg></div>
<div class="b" style="left:629.0px;top:38.2px;height:10px;line-height:10px;font-size:7.2px;">Main Scene*</div>
<div class="t" style="left:768.0px;top:38.0px;height:10px;line-height:10px;font-size:8px;color:#bbb;">&#8942;</div>
<div style="left:627.0px;top:48.2px;width:8px;height:8.6px;"><svg width="8" height="8.6" viewBox="0 0 8 8.6"><use href="#cube"/></svg></div>
<div class="t" style="left:637.0px;top:47.7px;height:10px;line-height:10px;font-size:7.3px;">Water</div>
<div style="left:627.0px;top:57.4px;width:8px;height:8.6px;"><svg width="8" height="8.6" viewBox="0 0 8 8.6"><use href="#cube"/></svg></div>
<div class="t" style="left:637.0px;top:56.9px;height:10px;line-height:10px;font-size:7.3px;">Main Camera</div>
<div class="t" style="left:621.0px;top:66.0px;height:10px;line-height:10px;font-size:6px;color:#8a8a8a;">&#9656;</div>
<div style="left:627.0px;top:66.7px;width:8px;height:8.6px;"><svg width="8" height="8.6" viewBox="0 0 8 8.6"><use href="#cubeb"/></svg></div>
<div class="blue" style="left:637.0px;top:66.2px;height:10px;line-height:10px;font-size:7.3px;">Island Level</div>
<div class="t" style="left:771.0px;top:66.5px;height:10px;line-height:10px;font-size:10px;color:#888;">&#8250;</div>
<div class="t" style="left:621.0px;top:75.3px;height:10px;line-height:10px;font-size:6px;color:#8a8a8a;">&#9656;</div>
<div style="left:627.0px;top:76.0px;width:8px;height:8.6px;"><svg width="8" height="8.6" viewBox="0 0 8 8.6"><use href="#cube"/></svg></div>
<div class="t" style="left:637.0px;top:75.5px;height:10px;line-height:10px;font-size:7.3px;">Cameras</div>
<div style="left:627.0px;top:85.4px;width:8px;height:8.6px;"><svg width="8" height="8.6" viewBox="0 0 8 8.6"><use href="#cube"/></svg></div>
<div class="t" style="left:637.0px;top:84.9px;height:10px;line-height:10px;font-size:7.3px;letter-spacing:0.68px;">-----------------WP---------------</div>
<div style="left:627.0px;top:94.6px;width:8px;height:8.6px;"><svg width="8" height="8.6" viewBox="0 0 8 8.6"><use href="#cube"/></svg></div>
<div class="t" style="left:637.0px;top:94.1px;height:10px;line-height:10px;font-size:7.3px;">Culling</div>
<div style="left:627.0px;top:103.9px;width:8px;height:8.6px;"><svg width="8" height="8.6" viewBox="0 0 8 8.6"><use href="#cubeb"/></svg></div>
<div class="blue" style="left:637.0px;top:103.4px;height:10px;line-height:10px;font-size:7.3px;">AppManager</div>
<div class="t" style="left:771.0px;top:103.7px;height:10px;line-height:10px;font-size:10px;color:#888;">&#8250;</div>
<div class="t" style="left:621.0px;top:112.4px;height:10px;line-height:10px;font-size:6px;color:#8a8a8a;">&#9656;</div>
<div style="left:627.0px;top:113.1px;width:8px;height:8.6px;"><svg width="8" height="8.6" viewBox="0 0 8 8.6"><use href="#cubeb"/></svg></div>
<div class="blue" style="left:637.0px;top:112.6px;height:10px;line-height:10px;font-size:7.3px;">Clouds Variant</div>
<div class="t" style="left:771.0px;top:112.9px;height:10px;line-height:10px;font-size:10px;color:#888;">&#8250;</div>
<div style="left:627.0px;top:122.3px;width:8px;height:8.6px;"><svg width="8" height="8.6" viewBox="0 0 8 8.6"><use href="#cube"/></svg></div>
<div class="t" style="left:637.0px;top:121.8px;height:10px;line-height:10px;font-size:7.3px;">WindZone</div>
<div style="left:627.0px;top:131.5px;width:8px;height:8.6px;"><svg width="8" height="8.6" viewBox="0 0 8 8.6"><use href="#cube"/></svg></div>
<div class="t" style="left:637.0px;top:131.0px;height:10px;line-height:10px;font-size:7.3px;">BuoyParticles</div>
<div style="left:627.0px;top:140.7px;width:8px;height:8.6px;"><svg width="8" height="8.6" viewBox="0 0 8 8.6"><use href="#cube"/></svg></div>
<div class="t" style="left:637.0px;top:140.2px;height:10px;line-height:10px;font-size:7.3px;">Post Processing</div>
<div class="t" style="left:621.0px;top:149.2px;height:10px;line-height:10px;font-size:6px;color:#8a8a8a;">&#9662;</div>
<div style="left:627.0px;top:149.9px;width:8px;height:8.6px;"><svg width="8" height="8.6" viewBox="0 0 8 8.6"><use href="#cubeb"/></svg></div>
<div class="blue" style="left:637.0px;top:149.4px;height:10px;line-height:10px;font-size:7.3px;">Boat Left</div>
<div class="t" style="left:771.0px;top:149.7px;height:10px;line-height:10px;font-size:10px;color:#888;">&#8250;</div>
<div style="left:761.0px;top:59.0px;width:8.0px;height:5.0px;background:#d83a2a;transform:skewX(-30deg);border-radius:1px;"></div>
<div style="left:593.0px;top:158.5px;width:184.5px;height:9.0px;background:#48484a;"></div>
<div class="t" style="left:621.0px;top:195.0px;height:10px;line-height:10px;font-size:6px;color:#8a8a8a;">&#9656;</div>
<div class="t" style="left:621.0px;top:204.0px;height:10px;line-height:10px;font-size:6px;color:#8a8a8a;">&#9662;</div>
<div class="t" style="left:771.0px;top:205.0px;height:10px;line-height:10px;font-size:10px;color:#888;">&#8250;</div>
<div style="left:593.0px;top:232.0px;width:184.5px;height:9.5px;background:#424244;"></div>
<div class="t" style="left:595.0px;top:232.0px;height:10px;line-height:10px;font-size:5px;color:#666;">&#9664;&#9654;</div>
<div style="left:777.5px;top:14.0px;width:1.5px;height:329.5px;background:#1e1e20;"></div>
<div style="left:779.0px;top:14.0px;width:230.0px;height:329.5px;background:#383838;"></div>
<div style="left:779.0px;top:15.0px;width:230.0px;height:11.5px;background:#262628;"></div>
<div style="left:779.0px;top:15.5px;width:51.0px;height:11.0px;background:#3a3a3c;"></div>
<div style="left:782.5px;top:18.5px;width:5.5px;height:5.5px;background:#e8e8e8;border-radius:50%;"></div>
<div style="left:784.6px;top:20.0px;width:1.3px;height:2.6px;background:#333;"></div>
<div class="t" style="left:791.0px;top:16.3px;height:10px;line-height:10px;font-size:7.3px;color:#cfcfcf;">Inspector</div>
<div style="left:782.5px;top:31.0px;width:14px;height:15px;"><svg width="14" height="15" viewBox="0 0 8 8.6"><use href="#cubeb"/></svg></div>
<div class="t" style="left:794.0px;top:39.5px;height:10px;line-height:10px;font-size:6px;color:#ddd;">&#9662;</div>
<div style="left:806.0px;top:33.5px;width:7.0px;height:7.0px;background:#2a2a2c;border-radius:1px;"></div>
<div class="t" style="left:807.0px;top:32.3px;height:10px;line-height:10px;font-size:6.1px;color:#eee;">&#10003;</div>
<div style="left:816.0px;top:33.0px;width:193.0px;height:8.8px;background:#2a2a2c;border-radius:2px;"></div>
<div class="b" style="left:819.0px;top:32.4px;height:10px;line-height:10px;font-size:7.2px;">BoatHull</div>
<div class="t" style="left:803.0px;top:45.6px;height:10px;line-height:10px;font-size:7.3px;">Tag</div>
<div style="left:818.5px;top:46.3px;width:105.0px;height:8.8px;background:#515153;border-radius:2px;"></div>
<div class="t" style="left:820.0px;top:45.6px;height:10px;line-height:10px;font-size:7.3px;color:#e0e0e0;">Untagged</div>
<div class="t" style="left:917.0px;top:45.8px;height:10px;line-height:10px;font-size:6.1px;color:#e0e0e0;">&#9662;</div>
<div class="t" style="left:932.0px;top:45.6px;height:10px;line-height:10px;font-size:7.3px;">Layer</div>
<div style="left:955.0px;top:46.3px;width:54.0px;height:8.8px;background:#515153;border-radius:2px;"></div>
<div class="t" style="left:956.5px;top:45.6px;height:10px;line-height:10px;font-size:7.3px;color:#e0e0e0;">Boat</div>
<div style="left:779.0px;top:60.3px;width:230.0px;height:0.8px;background:#1e1e20;"></div>
<div style="left:779.0px;top:61.0px;width:230.0px;height:13.0px;background:#3e3e40;"></div>
<div class="t" style="left:782.0px;top:62.3px;height:10px;line-height:10px;font-size:6.1px;color:#888;">&#9662;</div>
<div style="left:791.5px;top:66.0px;width:6.0px;height:1.2px;background:#6ec4f0;transform:rotate(-30deg);"></div>
<div style="left:789.0px;top:66.5px;width:6.0px;height:1.2px;background:#e8a33d;transform:rotate(60deg);"></div>
<div style="left:787.5px;top:69.0px;width:6.0px;height:1.2px;background:#a0d060;"></div>
<div class="b" style="left:813.0px;top:62.4px;height:10px;line-height:10px;font-size:7.2px;">Transform</div>
<div class="t" style="left:789.0px;top:76.5px;height:10px;line-height:10px;font-size:7.3px;">Position</div>
<div class="t" style="left:897.0px;top:76.5px;height:10px;line-height:10px;font-size:7.3px;">X</div>
<div style="left:903.0px;top:77.0px;width:43.0px;height:9.0px;background:#2a2a2c;border-radius:2px;"></div>
<div class="t" style="left:905.0px;top:76.5px;height:10px;line-height:10px;font-size:7.3px;color:#e0e0e0;">0</div>
<div class="t" style="left:950.5px;top:76.5px;height:10px;line-height:10px;font-size:7.3px;">Y</div>
<div style="left:956.5px;top:77.0px;width:44.0px;height:9.0px;background:#2a2a2c;border-radius:2px;"></div>
<div class="t" style="left:958.5px;top:76.5px;height:10px;line-height:10px;font-size:7.3px;color:#e0e0e0;">0</div>
<div class="t" style="left:1004.8px;top:76.5px;height:10px;line-height:10px;font-size:7.3px;">Z</div>
<div class="t" style="left:789.0px;top:88.5px;height:10px;line-height:10px;font-size:7.3px;">Rotation</div>
<div class="t" style="left:897.0px;top:88.5px;height:10px;line-height:10px;font-size:7.3px;">X</div>
<div style="left:903.0px;top:89.0px;width:43.0px;height:9.0px;background:#2a2a2c;border-radius:2px;"></div>
<div class="t" style="left:905.0px;top:88.5px;height:10px;line-height:10px;font-size:7.3px;color:#e0e0e0;">0</div>
<div class="t" style="left:950.5px;top:88.5px;height:10px;line-height:10px;font-size:7.3px;">Y</div>
<div style="left:956.5px;top:89.0px;width:44.0px;height:9.0px;background:#2a2a2c;border-radius:2px;"></div>
<div class="t" style="left:958.5px;top:88.5px;height:10px;line-height:10px;font-size:7.3px;color:#e0e0e0;">0</div>
<div class="t" style="left:1004.8px;top:88.5px;height:10px;line-height:10px;font-size:7.3px;">Z</div>
<div class="t" style="left:789.0px;top:100.4px;height:10px;line-height:10px;font-size:7.3px;">Scale</div>
<div class="t" style="left:897.0px;top:100.4px;height:10px;line-height:10px;font-size:7.3px;">X</div>
<div style="left:903.0px;top:100.9px;width:43.0px;height:9.0px;background:#2a2a2c;border-radius:2px;"></div>
<div class="t" style="left:905.0px;top:100.4px;height:10px;line-height:10px;font-size:7.3px;color:#e0e0e0;">1</div>
<div class="t" style="left:950.5px;top:100.4px;height:10px;line-height:10px;font-size:7.3px;">Y</div>
<div style="left:956.5px;top:100.9px;width:44.0px;height:9.0px;background:#2a2a2c;border-radius:2px;"></div>
<div class="t" style="left:958.5px;top:100.4px;height:10px;line-height:10px;font-size:7.3px;color:#e0e0e0;">1</div>
<div class="t" style="left:1004.8px;top:100.4px;height:10px;line-height:10px;font-size:7.3px;">Z</div>
<div style="left:779.0px;top:114.5px;width:230.0px;height:0.8px;background:#1e1e20;"></div>
<div style="left:779.0px;top:115.3px;width:230.0px;height:12.5px;background:#3e3e40;"></div>
<div class="t" style="left:782.0px;top:117.2px;height:10px;line-height:10px;font-size:6.1px;color:#888;">&#9656;</div>
<div style="left:789.5px;top:118.0px;width:7.0px;height:8.0px;background:#4f8fd8;border-radius:1px;"></div>
<div style="left:792.7px;top:118.0px;width:0.8px;height:8.0px;background:#2a4a7a;"></div>
<div style="left:789.5px;top:121.6px;width:7.0px;height:0.8px;background:#2a4a7a;"></div>
<div class="b" style="left:813.0px;top:117.2px;height:10px;line-height:10px;font-size:7.2px;">Boat_Interceptor (Mesh Filter)</div>
<div style="left:779.0px;top:127.8px;width:230.0px;height:0.8px;background:#1e1e20;"></div>
<div style="left:779.0px;top:128.6px;width:230.0px;height:12.5px;background:#3e3e40;"></div>
<div class="t" style="left:782.0px;top:130.0px;height:10px;line-height:10px;font-size:6.1px;color:#888;">&#9656;</div>
<div style="left:789.5px;top:130.8px;width:7.0px;height:8.0px;background:#4f8fd8;border-radius:1px;"></div>
<div style="left:791.0px;top:133.5px;width:4.0px;height:3.0px;background:#cfe0f5;"></div>
<div class="t" style="left:801.5px;top:129.8px;height:10px;line-height:10px;font-size:6.1px;color:#eee;">&#10003;</div>
<div class="b" style="left:813.0px;top:130.0px;height:10px;line-height:10px;font-size:7.2px;">Mesh Renderer</div>
<div style="left:779.0px;top:141.2px;width:230.0px;height:0.8px;background:#2a2a2c;"></div>
<div style="left:786.5px;top:144.0px;width:19.5px;height:19.5px;background:#0c0c0c;"></div>
<div style="left:787.5px;top:145.0px;width:17.5px;height:17.5px;border-radius:50%;background:radial-gradient(circle at 40% 35%,#d8d8d8 0 18%,#8aa0c0 35%,#3a4a68 60%,#1a2030 100%);"></div>
<div style="left:797.0px;top:145.0px;width:7.0px;height:17.5px;border-radius:0 9px 9px 0;background:linear-gradient(90deg,#e0a850,#b07828);opacity:.85;"></div>
<div class="t" style="left:810.0px;top:143.6px;height:10px;line-height:10px;font-size:9.4px;color:#8c8c8c;transform:scaleX(.86);transform-origin:0 50%;">Interceptor 1</div>
<div class="t" style="left:782.0px;top:163.0px;height:10px;line-height:10px;font-size:6px;color:#777;">&#9662;</div>
<div class="t" style="left:809.0px;top:157.2px;height:10px;line-height:10px;font-size:7.3px;color:#999;">Shader</div>
<div style="left:838.5px;top:157.6px;width:170.5px;height:9.0px;background:#515153;border-radius:2px;"></div>
<div class="t" style="left:841.0px;top:157.2px;height:10px;line-height:10px;font-size:7.3px;color:#e0e0e0;">BoatAttack/RaceBoats</div>
<div style="left:779.0px;top:169.5px;width:230.0px;height:0.8px;background:#2e2e30;"></div>
<div class="t" style="left:789.0px;top:177.4px;height:10px;line-height:10px;font-size:7.3px;">AlbedoAO</div>
<div class="t" style="left:789.0px;top:219.0px;height:10px;line-height:10px;font-size:7.2px;">Metallic(R) Smoothness(0) Colouring(B, A)</div>
<div class="t" style="left:789.0px;top:260.5px;height:10px;line-height:10px;font-size:7.3px;">Normal</div>
<div class="blue" style="left:789.0px;top:302.3px;height:10px;line-height:10px;font-size:7.3px;">LiveryBase</div>
<div class="t" style="left:789.0px;top:313.7px;height:10px;line-height:10px;font-size:7.3px;">LiveryDecal</div>
<div class="t" style="left:789.0px;top:333.3px;height:10px;line-height:10px;font-size:7.3px;">Render Queue</div>
<div style="left:952.0px;top:333.5px;width:57.0px;height:9.0px;background:#515153;border-radius:2px;"></div>
<div class="t" style="left:954.0px;top:333.3px;height:10px;line-height:10px;font-size:7.2px;color:#e0e0e0;">Geometry+200</div>
<div style="left:593.0px;top:343.5px;width:416.0px;height:223.5px;background:#383838;"></div>
<div style="left:593.0px;top:343.5px;width:416.0px;height:12.0px;background:#262628;"></div>
<div style="left:593.0px;top:344.5px;width:38.0px;height:11.0px;background:#3a3a3c;"></div>
<div style="left:596.0px;top:348.3px;width:7.0px;height:4.5px;background:#d0d0d0;border-radius:1px;"></div>
<div style="left:596.0px;top:347.3px;width:3.1px;height:2.0px;background:#d0d0d0;border-radius:1px 1px 0 0;"></div>
<div class="t" style="left:605.0px;top:345.6px;height:10px;line-height:10px;font-size:7.3px;color:#cfcfcf;">Project</div>
<div style="left:593.0px;top:355.5px;width:416.0px;height:11.5px;background:#3a3a3c;"></div>
<div class="b" style="left:594.5px;top:356.5px;height:10px;line-height:10px;font-size:12px;color:#eee;">+</div>
<div class="t" style="left:604.0px;top:356.8px;height:10px;line-height:10px;font-size:7px;color:#e0e0e0;">&#9662;</div>
<div style="left:823.0px;top:357.7px;width:176.5px;height:8.2px;background:#2a2a2c;border-radius:2px;"></div>
<div class="t" style="left:825.0px;top:357.0px;height:10px;line-height:10px;font-size:6px;color:#ccc;">&#9906;</div>
<div style="left:1000.5px;top:358.5px;width:5.0px;height:6.0px;background:#ddd;border-radius:1px;"></div>
<div style="left:1004.0px;top:360.5px;width:3.5px;height:3.5px;background:#ddd;border-radius:50%;"></div>
<div style="left:711.0px;top:367.0px;width:298.0px;height:11.8px;background:#414143;"></div>
<div style="left:593.0px;top:367.0px;width:117.0px;height:200.0px;background:#3a3a3c;"></div>
<div style="left:710.0px;top:355.5px;width:1.0px;height:212.0px;background:#2a2a2c;"></div>
<div class="t" style="left:595.5px;top:367.5px;height:10px;line-height:10px;font-size:6px;color:#888;">&#9662;</div>
<div class="t" style="left:602.0px;top:367.2px;height:10px;line-height:10px;font-size:8px;color:#f0b030;">&#9733;</div>
<div class="b" style="left:611.5px;top:367.5px;height:10px;line-height:10px;font-size:7.2px;">Favorites</div>
<div class="t" style="left:609.5px;top:377.0px;height:10px;line-height:10px;font-size:7px;color:#ddd;">&#9906;</div>
<div class="t" style="left:619.0px;top:377.2px;height:10px;line-height:10px;font-size:7.3px;">All Materials</div>
<div class="t" style="left:609.5px;top:386.3px;height:10px;line-height:10px;font-size:7px;color:#ddd;">&#9906;</div>
<div class="t" style="left:619.0px;top:386.5px;height:10px;line-height:10px;font-size:7.3px;">All Models</div>
<div class="t" style="left:609.5px;top:395.5px;height:10px;line-height:10px;font-size:7px;color:#ddd;">&#9906;</div>
<div class="t" style="left:619.0px;top:395.7px;height:10px;line-height:10px;font-size:7.3px;">All Prefabs</div>
<div style="left:593.0px;top:413.5px;width:117.0px;height:9.5px;background:#4c4c4e;"></div>
<div class="t" style="left:595.5px;top:413.3px;height:10px;line-height:10px;font-size:6px;color:#999;">&#9662;</div>
<div style="left:602.0px;top:416.0px;width:8.0px;height:5.0px;background:#e4e4e4;border-radius:1px;"></div>
<div style="left:602.0px;top:415.0px;width:3.6px;height:2.0px;background:#e4e4e4;border-radius:1px 1px 0 0;"></div>
<div class="b" style="left:612.5px;top:413.4px;height:10px;line-height:10px;font-size:7.2px;">Assets</div>
<div class="t" style="left:603.5px;top:422.4px;height:10px;line-height:10px;font-size:6px;color:#8a8a8a;">&#9656;</div>
<div style="left:610.5px;top:425.2px;width:7.0px;height:4.8px;background:#dcdcdc;border-radius:1px;"></div>
<div style="left:610.5px;top:424.2px;width:3.1px;height:2.0px;background:#dcdcdc;border-radius:1px 1px 0 0;"></div>
<div class="t" style="left:619.5px;top:422.6px;height:10px;line-height:10px;font-size:7.3px;">Animations</div>
<div class="t" style="left:603.5px;top:431.7px;height:10px;line-height:10px;font-size:6px;color:#8a8a8a;">&#9656;</div>
<div style="left:610.5px;top:434.5px;width:7.0px;height:4.8px;background:#dcdcdc;border-radius:1px;"></div>
<div style="left:610.5px;top:433.5px;width:3.1px;height:2.0px;background:#dcdcdc;border-radius:1px 1px 0 0;"></div>
<div class="t" style="left:619.5px;top:431.9px;height:10px;line-height:10px;font-size:7.3px;">Audio</div>
<div class="t" style="left:603.5px;top:440.9px;height:10px;line-height:10px;font-size:6px;color:#8a8a8a;">&#9656;</div>
<div style="left:610.5px;top:443.7px;width:7.0px;height:4.8px;background:#dcdcdc;border-radius:1px;"></div>
<div style="left:610.5px;top:442.7px;width:3.1px;height:2.0px;background:#dcdcdc;border-radius:1px 1px 0 0;"></div>
<div class="t" style="left:619.5px;top:441.1px;height:10px;line-height:10px;font-size:7.3px;">Data</div>
<div style="left:610.5px;top:453.0px;width:7.0px;height:4.8px;background:#dcdcdc;border-radius:1px;"></div>
<div style="left:610.5px;top:452.0px;width:3.1px;height:2.0px;background:#dcdcdc;border-radius:1px 1px 0 0;"></div>
<div class="t" style="left:619.5px;top:450.4px;height:10px;line-height:10px;font-size:7.3px;">Fonts</div>
<div class="t" style="left:603.5px;top:459.5px;height:10px;line-height:10px;font-size:6px;color:#8a8a8a;">&#9656;</div>
<div style="left:610.5px;top:462.3px;width:7.0px;height:4.8px;background:#dcdcdc;border-radius:1px;"></div>
<div style="left:610.5px;top:461.3px;width:3.1px;height:2.0px;background:#dcdcdc;border-radius:1px 1px 0 0;"></div>
<div class="t" style="left:619.5px;top:459.7px;height:10px;line-height:10px;font-size:7.3px;">Gizmos</div>
<div style="left:610.5px;top:471.5px;width:7.0px;height:4.8px;background:#dcdcdc;border-radius:1px;"></div>
<div style="left:610.5px;top:470.5px;width:3.1px;height:2.0px;background:#dcdcdc;border-radius:1px 1px 0 0;"></div>
<div class="t" style="left:619.5px;top:468.9px;height:10px;line-height:10px;font-size:7.3px;">Main Scene</div>
<div style="left:610.5px;top:480.8px;width:7.0px;height:4.8px;background:#dcdcdc;border-radius:1px;"></div>
<div style="left:610.5px;top:479.8px;width:3.1px;height:2.0px;background:#dcdcdc;border-radius:1px 1px 0 0;"></div>
<div class="t" style="left:619.5px;top:478.2px;height:10px;line-height:10px;font-size:7.3px;">Materials</div>
<div class="t" style="left:603.5px;top:487.3px;height:10px;line-height:10px;font-size:6px;color:#8a8a8a;">&#9656;</div>
<div style="left:610.5px;top:490.1px;width:7.0px;height:4.8px;background:#dcdcdc;border-radius:1px;"></div>
<div style="left:610.5px;top:489.1px;width:3.1px;height:2.0px;background:#dcdcdc;border-radius:1px 1px 0 0;"></div>
<div class="t" style="left:619.5px;top:487.5px;height:10px;line-height:10px;font-size:7.3px;">NavMeshComponents</div>
<div class="t" style="left:603.5px;top:496.6px;height:10px;line-height:10px;font-size:6px;color:#8a8a8a;">&#9656;</div>
<div style="left:610.5px;top:499.4px;width:7.0px;height:4.8px;background:#dcdcdc;border-radius:1px;"></div>
<div style="left:610.5px;top:498.4px;width:3.1px;height:2.0px;background:#dcdcdc;border-radius:1px 1px 0 0;"></div>
<div class="t" style="left:619.5px;top:496.8px;height:10px;line-height:10px;font-size:7.3px;">Objects</div>
<div style="left:610.5px;top:508.6px;width:7.0px;height:4.8px;background:#dcdcdc;border-radius:1px;"></div>
<div style="left:610.5px;top:507.6px;width:3.1px;height:2.0px;background:#dcdcdc;border-radius:1px 1px 0 0;"></div>
<div class="t" style="left:619.5px;top:506.0px;height:10px;line-height:10px;font-size:7.3px;">PhysicsMaterials</div>
<div class="t" style="left:603.5px;top:515.1px;height:10px;line-height:10px;font-size:6px;color:#8a8a8a;">&#9656;</div>
<div style="left:610.5px;top:517.9px;width:7.0px;height:4.8px;background:#dcdcdc;border-radius:1px;"></div>
<div style="left:610.5px;top:516.9px;width:3.1px;height:2.0px;background:#dcdcdc;border-radius:1px 1px 0 0;"></div>
<div class="t" style="left:619.5px;top:515.3px;height:10px;line-height:10px;font-size:7.3px;">scenes</div>
<div class="t" style="left:603.5px;top:524.4px;height:10px;line-height:10px;font-size:6px;color:#8a8a8a;">&#9656;</div>
<div style="left:610.5px;top:527.2px;width:7.0px;height:4.8px;background:#dcdcdc;border-radius:1px;"></div>
<div style="left:610.5px;top:526.2px;width:3.1px;height:2.0px;background:#dcdcdc;border-radius:1px 1px 0 0;"></div>
<div class="t" style="left:619.5px;top:524.6px;height:10px;line-height:10px;font-size:7.3px;">Scripts</div>
<div class="t" style="left:603.5px;top:533.6px;height:10px;line-height:10px;font-size:6px;color:#8a8a8a;">&#9656;</div>
<div style="left:610.5px;top:536.4px;width:7.0px;height:4.8px;background:#dcdcdc;border-radius:1px;"></div>
<div style="left:610.5px;top:535.4px;width:3.1px;height:2.0px;background:#dcdcdc;border-radius:1px 1px 0 0;"></div>
<div class="t" style="left:619.5px;top:533.8px;height:10px;line-height:10px;font-size:7.3px;">Shaders</div>
<div class="t" style="left:603.5px;top:542.9px;height:10px;line-height:10px;font-size:6px;color:#8a8a8a;">&#9656;</div>
<div style="left:610.5px;top:545.7px;width:7.0px;height:4.8px;background:#dcdcdc;border-radius:1px;"></div>
<div style="left:610.5px;top:544.7px;width:3.1px;height:2.0px;background:#dcdcdc;border-radius:1px 1px 0 0;"></div>
<div class="t" style="left:619.5px;top:543.1px;height:10px;line-height:10px;font-size:7.3px;">TextMesh Pro</div>
<div class="t" style="left:603.5px;top:552.2px;height:10px;line-height:10px;font-size:6px;color:#8a8a8a;">&#9656;</div>
<div style="left:610.5px;top:555.0px;width:7.0px;height:4.8px;background:#dcdcdc;border-radius:1px;"></div>
<div style="left:610.5px;top:554.0px;width:3.1px;height:2.0px;background:#dcdcdc;border-radius:1px 1px 0 0;"></div>
<div class="t" style="left:619.5px;top:552.4px;height:10px;line-height:10px;font-size:7.3px;">Textures</div>
<div class="t" style="left:595.5px;top:561.5px;height:10px;line-height:10px;font-size:6px;color:#8a8a8a;">&#9656;</div>
<div style="left:602.0px;top:564.5px;width:8.0px;height:5.0px;background:#e4e4e4;border-radius:1px;"></div>
<div style="left:602.0px;top:563.5px;width:3.6px;height:2.0px;background:#e4e4e4;border-radius:1px 1px 0 0;"></div>
<div class="b" style="left:612.5px;top:561.7px;height:10px;line-height:10px;font-size:7.2px;">Packages</div>
<div style="left:725.3px;top:395.3px;width:29.0px;height:20.0px;background:#c9c9c9;border-radius:2px;"></div>
<div style="left:725.3px;top:391.3px;width:13.0px;height:7.0px;background:#c9c9c9;border-radius:2px 2.5px 0 0;"></div>
<div style="left:737.3px;top:393.3px;width:5.0px;height:3.0px;background:#c9c9c9;transform:skewX(40deg);"></div>
<div class="lbl" style="left:715.8px;top:423.0px;height:10px;line-height:10px;">Animations</div>
<div style="left:774.3px;top:395.3px;width:29.0px;height:20.0px;background:#c9c9c9;border-radius:2px;"></div>
<div style="left:774.3px;top:391.3px;width:13.0px;height:7.0px;background:#c9c9c9;border-radius:2px 2.5px 0 0;"></div>
<div style="left:786.3px;top:393.3px;width:5.0px;height:3.0px;background:#c9c9c9;transform:skewX(40deg);"></div>
<div class="lbl" style="left:764.8px;top:423.0px;height:10px;line-height:10px;">Audio</div>
<div style="left:823.5px;top:395.3px;width:29.0px;height:20.0px;background:#c9c9c9;border-radius:2px;"></div>
<div style="left:823.5px;top:391.3px;width:13.0px;height:7.0px;background:#c9c9c9;border-radius:2px 2.5px 0 0;"></div>
<div style="left:835.5px;top:393.3px;width:5.0px;height:3.0px;background:#c9c9c9;transform:skewX(40deg);"></div>
<div class="lbl" style="left:814.0px;top:423.0px;height:10px;line-height:10px;">Data</div>
<div style="left:872.8px;top:395.3px;width:29.0px;height:20.0px;background:#c9c9c9;border-radius:2px;"></div>
<div style="left:872.8px;top:391.3px;width:13.0px;height:7.0px;background:#c9c9c9;border-radius:2px 2.5px 0 0;"></div>
<div style="left:884.8px;top:393.3px;width:5.0px;height:3.0px;background:#c9c9c9;transform:skewX(40deg);"></div>
<div class="lbl" style="left:863.3px;top:423.0px;height:10px;line-height:10px;">Fonts</div>
<div style="left:922.0px;top:395.3px;width:29.0px;height:20.0px;background:#c9c9c9;border-radius:2px;"></div>
<div style="left:922.0px;top:391.3px;width:13.0px;height:7.0px;background:#c9c9c9;border-radius:2px 2.5px 0 0;"></div>
<div style="left:934.0px;top:393.3px;width:5.0px;height:3.0px;background:#c9c9c9;transform:skewX(40deg);"></div>
<div class="lbl" style="left:912.5px;top:423.0px;height:10px;line-height:10px;">Gizmos</div>
<div style="left:971.0px;top:395.3px;width:29.0px;height:20.0px;background:#c9c9c9;border-radius:2px;"></div>
<div style="left:971.0px;top:391.3px;width:13.0px;height:7.0px;background:#c9c9c9;border-radius:2px 2.5px 0 0;"></div>
<div style="left:983.0px;top:393.3px;width:5.0px;height:3.0px;background:#c9c9c9;transform:skewX(40deg);"></div>
<div class="lbl" style="left:961.5px;top:423.0px;height:10px;line-height:10px;">Main Scene</div>
<div style="left:725.3px;top:449.5px;width:29.0px;height:20.0px;background:#c9c9c9;border-radius:2px;"></div>
<div style="left:725.3px;top:445.5px;width:13.0px;height:7.0px;background:#c9c9c9;border-radius:2px 2.5px 0 0;"></div>
<div style="left:737.3px;top:447.5px;width:5.0px;height:3.0px;background:#c9c9c9;transform:skewX(40deg);"></div>
<div class="lbl" style="left:715.8px;top:476.5px;height:10px;line-height:10px;">NavMesh...</div>
<div style="left:774.3px;top:449.5px;width:29.0px;height:20.0px;background:#c9c9c9;border-radius:2px;"></div>
<div style="left:774.3px;top:445.5px;width:13.0px;height:7.0px;background:#c9c9c9;border-radius:2px 2.5px 0 0;"></div>
<div style="left:786.3px;top:447.5px;width:5.0px;height:3.0px;background:#c9c9c9;transform:skewX(40deg);"></div>
<div class="lbl" style="left:764.8px;top:476.5px;height:10px;line-height:10px;">Objects</div>
<div style="left:823.5px;top:449.5px;width:29.0px;height:20.0px;background:#c9c9c9;border-radius:2px;"></div>
<div style="left:823.5px;top:445.5px;width:13.0px;height:7.0px;background:#c9c9c9;border-radius:2px 2.5px 0 0;"></div>
<div style="left:835.5px;top:447.5px;width:5.0px;height:3.0px;background:#c9c9c9;transform:skewX(40deg);"></div>
<div class="lbl" style="left:814.0px;top:476.5px;height:10px;line-height:10px;">PhysicsMa...</div>
<div style="left:872.8px;top:449.5px;width:29.0px;height:20.0px;background:#c9c9c9;border-radius:2px;"></div>
<div style="left:872.8px;top:445.5px;width:13.0px;height:7.0px;background:#c9c9c9;border-radius:2px 2.5px 0 0;"></div>
<div style="left:884.8px;top:447.5px;width:5.0px;height:3.0px;background:#c9c9c9;transform:skewX(40deg);"></div>
<div class="lbl" style="left:863.3px;top:476.5px;height:10px;line-height:10px;">scenes</div>
<div style="left:922.0px;top:449.5px;width:29.0px;height:20.0px;background:#c9c9c9;border-radius:2px;"></div>
<div style="left:922.0px;top:445.5px;width:13.0px;height:7.0px;background:#c9c9c9;border-radius:2px 2.5px 0 0;"></div>
<div style="left:934.0px;top:447.5px;width:5.0px;height:3.0px;background:#c9c9c9;transform:skewX(40deg);"></div>
<div class="lbl" style="left:912.5px;top:476.5px;height:10px;line-height:10px;">Scripts</div>
<div style="left:971.0px;top:449.5px;width:29.0px;height:20.0px;background:#c9c9c9;border-radius:2px;"></div>
<div style="left:971.0px;top:445.5px;width:13.0px;height:7.0px;background:#c9c9c9;border-radius:2px 2.5px 0 0;"></div>
<div style="left:983.0px;top:447.5px;width:5.0px;height:3.0px;background:#c9c9c9;transform:skewX(40deg);"></div>
<div class="lbl" style="left:961.5px;top:476.5px;height:10px;line-height:10px;">Shaders</div>
<div style="left:725.3px;top:503.8px;width:29.0px;height:20.0px;background:#c9c9c9;border-radius:2px;"></div>
<div style="left:725.3px;top:499.8px;width:13.0px;height:7.0px;background:#c9c9c9;border-radius:2px 2.5px 0 0;"></div>
<div style="left:737.3px;top:501.8px;width:5.0px;height:3.0px;background:#c9c9c9;transform:skewX(40deg);"></div>
<div class="lbl" style="left:715.8px;top:530.3px;height:10px;line-height:10px;">Textures</div>
<div class="lbl" style="left:764.8px;top:530.3px;height:10px;line-height:10px;">Boat Rigid...</div>
<div class="lbl" style="left:814.0px;top:530.3px;height:10px;line-height:10px;">BoatAttack</div>
<div class="lbl" style="left:863.3px;top:530.3px;height:10px;line-height:10px;">InputSyst...</div>
<div class="lbl" style="left:912.5px;top:530.3px;height:10px;line-height:10px;">Interceptor...</div>
<div class="lbl" style="left:961.5px;top:530.3px;height:10px;line-height:10px;">Main Scene</div>
<div style="left:772.7px;top:495.3px;width:33.0px;height:32.5px;background:#8a8a8a;"></div>
<div style="left:779.4px;top:503.5px;width:21.0px;height:1.7px;background:#dcdcdc;"></div>
<div style="left:791.0px;top:501.7px;width:3.6px;height:5.2px;background:#5aa0e0;border-radius:1px;"></div>
<div style="left:779.4px;top:511.2px;width:21.0px;height:1.7px;background:#dcdcdc;"></div>
<div style="left:779.0px;top:509.4px;width:3.6px;height:5.2px;background:#5aa0e0;border-radius:1px;"></div>
<div style="left:779.4px;top:518.8px;width:21.0px;height:1.7px;background:#dcdcdc;"></div>
<div style="left:785.2px;top:517.0px;width:3.6px;height:5.2px;background:#5aa0e0;border-radius:1px;"></div>
<div style="left:819.0px;top:495.0px;width:44px;height:34px;"><svg width="44" height="34" viewBox="843 597 44 34"><polygon points="845.5,602.5 856.5,599.6 856.5,622.5 845.5,625.4" fill="#f2f2f2"/><polygon points="856.5,599.6 868,602.5 868,625.4 856.5,622.5" fill="#dadada"/><polygon points="868,602.5 879,599.6 879,622.5 868,625.4" fill="#f2f2f2"/><circle cx="880.5" cy="614.2" r="3.6" fill="none" stroke="#e6e6e6" stroke-width="2.2"/><polygon points="871.5,607.5 865.2,618.5 869.3,618.5 867,628.6 875.6,615.6 871.3,615.6 874.5,607.5" fill="#2f9be8"/></svg></div>
<div style="left:871.0px;top:494.0px;width:38px;height:36px;"><svg width="38" height="36" viewBox="895 596 38 36"><g fill="none" stroke="#5bc0f4" stroke-width="2.3" stroke-linejoin="round"><polygon points="909.7,599.6 921,605.5 921,619 909.7,624.6 898.4,619 898.4,605.5"/><polyline points="898.4,605.5 909.7,611.5 921,605.5"/><line x1="909.7" y1="611.5" x2="909.7" y2="624.6"/></g><rect x="912.5" y="613" width="18" height="17" fill="#383838"/><text x="912.6" y="627" font-family="Liberation Sans, sans-serif" font-weight="bold" font-size="15.5" fill="#f07a2a" textLength="17.5" lengthAdjust="spacingAndGlyphs">{}</text></svg></div>
<div style="left:918.8px;top:494.7px;width:34.8px;height:34.1px;background:#080808;"></div>
<div style="left:920.7px;top:496.7px;width:30.6px;height:30.6px;border-radius:50%;background:radial-gradient(circle at 38% 35%,#e8e8e8 0 12%,#9aa8c8 30%,#4a5a80 55%,#202840 100%);border:1px solid #d8d8d8;box-sizing:border-box;"></div>
<div style="left:936.5px;top:497.5px;width:14.0px;height:29.0px;border-radius:0 14.5px 14.5px 0;background:linear-gradient(90deg,#f6cc6a,#f0b04a);"></div>
<div style="left:929.0px;top:501.0px;width:6.5px;height:20.0px;background:#27304c;border-radius:2px;opacity:.85;"></div>
<div style="left:924.0px;top:510.0px;width:7.0px;height:9.0px;background:#d8dce8;border-radius:3px;opacity:.8;"></div>
<div style="left:966.0px;top:496.0px;width:36px;height:34px;"><svg width="36" height="34" viewBox="990 598 36 34"><g fill="none" stroke="#f6f6f6" stroke-width="2.7" stroke-linejoin="round"><path d="M994.3,612.4 L1005.5,602.8 L1017,600.3 L1019.8,612.4 L1017,625.2 L1005.5,622.2 Z"/><path d="M994.3,612.4 H1010.5 M1017,600.3 L1010.5,612.4 L1017,625.2"/></g></svg></div>
<div style="left:627.0px;top:155.0px;width:135.0px;height:294.0px;background:#3c3c3e;box-shadow:0 2px 6px rgba(0,0,0,.55);"></div>
<div style="left:627.0px;top:155.0px;width:135.0px;height:19.0px;background:#fdfdfd;border-top:1px solid #3a78c8;box-sizing:border-box;"></div>
<div class="t" style="left:632.0px;top:159.5px;height:10px;line-height:10px;font-size:7.2px;color:#505050;filter:blur(.25px);">Color</div>
<div style="left:751.0px;top:160.0px;width:10.5px;height:11.0px;background:#d94a48;"></div>
<div style="left:754.5px;top:163.5px;width:3.5px;height:4.0px;background:#f0b0a0;border-radius:1px;"></div>
<div style="left:755.0px;top:166.0px;width:7px;height:10px;"><svg width="7" height="10" viewBox="0 0 7 10"><polygon points="0,0 0,8 2,6 3.5,9.5 5,9 3.5,5.7 6,5.5" fill="#fff" stroke="#222" stroke-width="0.6"/></svg></div>
<div style="left:632.5px;top:186.6px;width:9.0px;height:2.2px;background:#e4e4e4;transform:rotate(-45deg);"></div>
<div style="left:638.8px;top:181.6px;width:5.2px;height:5.2px;background:#f0f0f0;border-radius:1.5px;transform:rotate(-45deg);"></div>
<div style="left:712.5px;top:181.0px;width:44.0px;height:14.0px;border-radius:2px;border:1px solid #fff;box-sizing:border-box;background-color:#e8e8e8;background-image:linear-gradient(45deg,#ccc 25%,transparent 25%,transparent 75%,#ccc 75%),linear-gradient(45deg,#ccc 25%,transparent 25%,transparent 75%,#ccc 75%);background-size:4px 4px;background-position:0 0,2px 2px;"></div>
<div style="left:632.5px;top:202.5px;width:123.0px;height:123.0px;border-radius:50%;background:conic-gradient(from 90deg,#ff0000,#ff00ff,#0000ff,#00ffff,#00ff00,#ffff00,#ff0000);-webkit-mask:radial-gradient(circle,transparent 0 47.5px,#000 48.5px 61px,transparent 62px);mask:radial-gradient(circle,transparent 0 47.5px,#000 48.5px 61px,transparent 62px);"></div>
<div style="left:664.0px;top:234.0px;width:60.5px;height:60.5px;background:linear-gradient(to top,#000,rgba(0,0,0,0)),linear-gradient(to right,#fff,#ffa900);"></div>
<div style="left:722.0px;top:233.0px;width:2.5px;height:2.5px;border:0.8px solid #fff;border-radius:50%;"></div>
<div style="left:731.0px;top:222.0px;width:11.0px;height:11.0px;border:1.3px solid #fff;border-radius:50%;box-sizing:border-box;"></div>
<div style="left:708.5px;top:333.3px;width:47.5px;height:9.5px;background:#48484a;border:1px solid #4a74b4;border-radius:2px;box-sizing:border-box;"></div>
<div class="t" style="left:711.0px;top:333.1px;height:10px;line-height:10px;font-size:7.2px;color:#e4e4e4;">RGB 0-255</div>
<div class="t" style="left:748.5px;top:333.3px;height:10px;line-height:10px;font-size:6.1px;color:#e0e0e0;">&#9662;</div>
<div class="t" style="left:632.5px;top:348.7px;height:10px;line-height:10px;font-size:7.3px;color:#aaa;">R</div>
<div style="left:642.7px;top:348.9px;width:84.0px;height:9.6px;background:linear-gradient(90deg,#00a900,#ffa900);"></div>
<div style="left:724.7px;top:348.5px;width:1.8px;height:10.4px;background:#fff;box-shadow:0 0 1px #000;"></div>
<div style="left:730.0px;top:349.0px;width:26.0px;height:9.4px;background:#2a2a2c;border-radius:2px;"></div>
<div class="t" style="left:733.0px;top:348.7px;height:10px;line-height:10px;font-size:7.3px;color:#e0e0e0;">255</div>
<div class="t" style="left:632.5px;top:363.9px;height:10px;line-height:10px;font-size:7.3px;color:#aaa;">G</div>
<div style="left:642.7px;top:364.1px;width:84.0px;height:9.6px;background:linear-gradient(90deg,#ff0000,#ffff00);"></div>
<div style="left:695.7px;top:363.7px;width:1.8px;height:10.4px;background:#fff;box-shadow:0 0 1px #000;"></div>
<div style="left:730.0px;top:364.2px;width:26.0px;height:9.4px;background:#2a2a2c;border-radius:2px;"></div>
<div class="t" style="left:733.0px;top:363.9px;height:10px;line-height:10px;font-size:7.3px;color:#e0e0e0;">169</div>
<div class="t" style="left:632.5px;top:379.0px;height:10px;line-height:10px;font-size:7.3px;color:#aaa;">B</div>
<div style="left:642.7px;top:379.2px;width:84.0px;height:9.6px;background:linear-gradient(90deg,#ffa900,#ffa9ff);"></div>
<div style="left:642.7px;top:378.8px;width:1.8px;height:10.4px;background:#fff;box-shadow:0 0 1px #000;"></div>
<div style="left:730.0px;top:379.3px;width:26.0px;height:9.4px;background:#2a2a2c;border-radius:2px;"></div>
<div class="t" style="left:733.0px;top:379.0px;height:10px;line-height:10px;font-size:7.3px;color:#e0e0e0;">0</div>
<div class="t" style="left:632.5px;top:394.2px;height:10px;line-height:10px;font-size:7.3px;color:#aaa;">A</div>
<div style="left:642.7px;top:394.4px;width:84.0px;height:9.6px;background:linear-gradient(90deg,rgba(255,169,0,0),#ffa900 85%),linear-gradient(45deg,#bbb 25%,transparent 25%,transparent 75%,#bbb 75%) 0 0/4px 4px,linear-gradient(45deg,#bbb 25%,#fff 25%,#fff 75%,#bbb 75%) 2px 2px/4px 4px;"></div>
<div style="left:642.7px;top:394.0px;width:1.8px;height:10.4px;background:#fff;box-shadow:0 0 1px #000;"></div>
<div style="left:730.0px;top:394.5px;width:26.0px;height:9.4px;background:#2a2a2c;border-radius:2px;"></div>
<div class="t" style="left:733.0px;top:394.2px;height:10px;line-height:10px;font-size:7.3px;color:#e0e0e0;">0</div>
<div class="t" style="left:633.7px;top:409.0px;height:10px;line-height:10px;font-size:7.3px;">Hexadecimal</div>
<div style="left:708.7px;top:409.3px;width:47.3px;height:9.4px;background:#2a2a2c;border-radius:2px;"></div>
<div class="t" style="left:711.0px;top:409.0px;height:10px;line-height:10px;font-size:7.3px;color:#e0e0e0;">FFA900</div>
<div class="t" style="left:636.0px;top:423.0px;height:10px;line-height:10px;font-size:6px;color:#888;">&#9662;</div>
<div class="t" style="left:643.0px;top:423.0px;height:10px;line-height:10px;font-size:7.3px;">Swatches</div>
<div class="t" style="left:749.0px;top:423.5px;height:10px;line-height:10px;font-size:8px;color:#bbb;">&#8942;</div>
<div style="left:635.0px;top:437.5px;width:3.0px;height:3.0px;background:#f0a020;border-radius:50%;"></div>
<div class="t" style="left:645.5px;top:434.8px;height:10px;line-height:10px;font-size:7.3px;color:#777;">Click to add new preset</div>
</div>

</body>
</html>
